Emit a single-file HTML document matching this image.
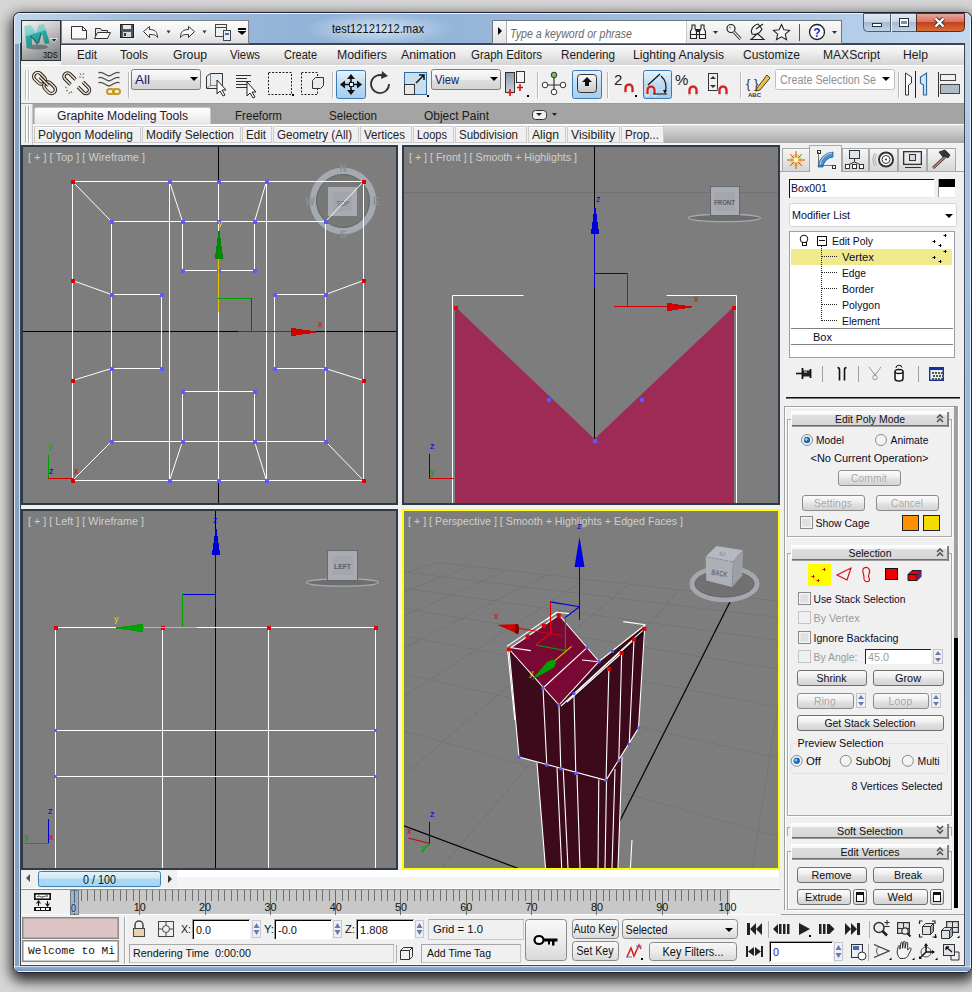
<!DOCTYPE html>
<html><head><meta charset="utf-8"><title>3ds Max</title>
<style>html,body{margin:0;padding:0;width:972px;height:992px;overflow:hidden;background:#d6d6d6;font-family:"Liberation Sans",sans-serif}</style>
</head><body><svg width="972" height="992" viewBox="0 0 972 992" style="position:absolute;left:0;top:0;display:block"><defs><filter id="shd" x="-5%" y="-5%" width="110%" height="110%"><feGaussianBlur stdDeviation="6.5"/></filter><linearGradient id="glass" x1="0" y1="0" x2="1" y2="0"><stop offset="0" stop-color="#bcd2ea"/><stop offset="0.3" stop-color="#c4d8ee"/><stop offset="0.6" stop-color="#bcd2ea"/><stop offset="1" stop-color="#b8cfe8"/></linearGradient><linearGradient id="tbar" x1="0" y1="0" x2="1" y2="0"><stop offset="0" stop-color="#c0d6ec"/><stop offset="0.12" stop-color="#a4c0e0"/><stop offset="0.3" stop-color="#92b2d7"/><stop offset="0.55" stop-color="#98b7da"/><stop offset="0.8" stop-color="#aac6e4"/><stop offset="1" stop-color="#c4d8ee"/></linearGradient><radialGradient id="glow" cx="0.5" cy="0.5" r="0.5"><stop offset="0" stop-color="#d8e8f6" stop-opacity="0.9"/><stop offset="1" stop-color="#d8e8f6" stop-opacity="0"/></radialGradient><linearGradient id="rfr" x1="0" y1="0" x2="0" y2="1"><stop offset="0" stop-color="#c4d8ee"/><stop offset="0.12" stop-color="#a8c4e2"/><stop offset="0.4" stop-color="#98b8da"/><stop offset="1" stop-color="#9cbcde"/></linearGradient><linearGradient id="bfr" x1="0" y1="0" x2="0" y2="1"><stop offset="0" stop-color="#8eaed2"/><stop offset="1" stop-color="#7898c0"/></linearGradient><linearGradient id="qat" x1="0" y1="0" x2="0" y2="1"><stop offset="0" stop-color="#fdfdfd"/><stop offset="0.5" stop-color="#f0f0f0"/><stop offset="1" stop-color="#dedede"/></linearGradient><linearGradient id="ic" x1="0" y1="0" x2="0" y2="1"><stop offset="0" stop-color="#fafafa"/><stop offset="1" stop-color="#e2e2e2"/></linearGradient><linearGradient id="wb" x1="0" y1="0" x2="0" y2="1"><stop offset="0" stop-color="#e4ecf5"/><stop offset="0.45" stop-color="#c9d8ea"/><stop offset="0.5" stop-color="#a9bcd3"/><stop offset="1" stop-color="#c0d3e8"/></linearGradient><linearGradient id="wbc" x1="0" y1="0" x2="0" y2="1"><stop offset="0" stop-color="#eaa79c"/><stop offset="0.45" stop-color="#d9735f"/><stop offset="0.5" stop-color="#c7401f"/><stop offset="1" stop-color="#d8703a"/></linearGradient><linearGradient id="logo" x1="0" y1="0" x2="0.5" y2="1"><stop offset="0" stop-color="#f4f4f4"/><stop offset="0.4" stop-color="#d0d0d0"/><stop offset="1" stop-color="#8a8a8a"/></linearGradient><linearGradient id="mg" x1="0" y1="0" x2="0.35" y2="1"><stop offset="0" stop-color="#a6dcd8"/><stop offset="0.48" stop-color="#7ccbc6"/><stop offset="0.52" stop-color="#2eaaa5"/><stop offset="1" stop-color="#1c9490"/></linearGradient><linearGradient id="menu" x1="0" y1="0" x2="0" y2="1"><stop offset="0" stop-color="#fbfbfb"/><stop offset="0.5" stop-color="#e8e8e8"/><stop offset="1" stop-color="#d4d4d4"/></linearGradient><linearGradient id="dd" x1="0" y1="0" x2="0" y2="1"><stop offset="0" stop-color="#fbfbfb"/><stop offset="0.5" stop-color="#ececec"/><stop offset="0.51" stop-color="#dfdfdf"/><stop offset="1" stop-color="#d2d2d2"/></linearGradient><linearGradient id="act" x1="0" y1="0" x2="0" y2="1"><stop offset="0" stop-color="#e6f2fc"/><stop offset="0.5" stop-color="#bcdcf4"/><stop offset="1" stop-color="#a6cdee"/></linearGradient><linearGradient id="piv" x1="0" y1="0" x2="0" y2="1"><stop offset="0" stop-color="#8a96a4"/><stop offset="1" stop-color="#d0d8e0"/></linearGradient><linearGradient id="kb" x1="0" y1="0" x2="0" y2="1"><stop offset="0" stop-color="#f8f8f8"/><stop offset="1" stop-color="#c8c8c8"/></linearGradient><linearGradient id="rbr" x1="0" y1="0" x2="0" y2="1"><stop offset="0" stop-color="#dedede"/><stop offset="1" stop-color="#a9a9a9"/></linearGradient><linearGradient id="rtab" x1="0" y1="0" x2="0" y2="1"><stop offset="0" stop-color="#ffffff"/><stop offset="0.6" stop-color="#f2f2f2"/><stop offset="1" stop-color="#e4e4e4"/></linearGradient><clipPath id="c1"><rect x="23" y="147" width="373" height="356"/></clipPath><clipPath id="c2"><rect x="404" y="147" width="374" height="356"/></clipPath><clipPath id="c3"><rect x="23" y="511" width="373" height="357"/></clipPath><clipPath id="c4"><rect x="404" y="511" width="374" height="357"/></clipPath><linearGradient id="tabi" x1="0" y1="0" x2="0" y2="1"><stop offset="0" stop-color="#f6f6f6"/><stop offset="0.5" stop-color="#e6e6e6"/><stop offset="1" stop-color="#d4d4d4"/></linearGradient><linearGradient id="rh" x1="0" y1="0" x2="0" y2="1"><stop offset="0" stop-color="#ffffff"/><stop offset="0.25" stop-color="#f6f6f6"/><stop offset="0.3" stop-color="#dedede"/><stop offset="1" stop-color="#d6d6d6"/></linearGradient><linearGradient id="btn" x1="0" y1="0" x2="0" y2="1"><stop offset="0" stop-color="#fdfdfd"/><stop offset="0.45" stop-color="#eeeeee"/><stop offset="0.55" stop-color="#e2e2e2"/><stop offset="1" stop-color="#d2d2d2"/></linearGradient><linearGradient id="thumb" x1="0" y1="0" x2="0" y2="1"><stop offset="0" stop-color="#e2f2fb"/><stop offset="0.45" stop-color="#cfe9f8"/><stop offset="0.5" stop-color="#a9d9f4"/><stop offset="1" stop-color="#a6d6f2"/></linearGradient><linearGradient id="kbtn" x1="0" y1="0" x2="0" y2="1"><stop offset="0" stop-color="#f8f8f8"/><stop offset="0.5" stop-color="#ececec"/><stop offset="1" stop-color="#d8d8d8"/></linearGradient></defs><rect x="0" y="0" width="972" height="992" fill="#d5d5d5" />
<rect x="11" y="15" width="964" height="966" rx="10" fill="#000" opacity="0.8" filter="url(#shd)"/>
<rect x="13.5" y="12.5" width="958" height="960" rx="6" fill="url(#glass)" stroke="#1f252c" stroke-width="1"/>
<path d="M15 19 a5 5 0 0 1 5-5 h945 a5 5 0 0 1 5 5 v24 h-955z" fill="url(#tbar)"/>
<ellipse cx="378" cy="29" rx="75" ry="16" fill="url(#glow)"/>
<rect x="14.5" y="13.5" width="956" height="958" rx="5" fill="none" stroke="#f4f8fc" stroke-opacity="0.8" stroke-width="1"/>
<rect x="966" y="44" width="4" height="922" fill="url(#rfr)" />
<rect x="15" y="44" width="4" height="922" fill="#84a2c2" />
<rect x="19" y="44" width="1" height="922" fill="#cfdeee" />
<rect x="15" y="967" width="955" height="4" fill="url(#bfr)" />
<rect x="15" y="966" width="955" height="1" fill="#d0e0f0" />
<rect x="970" y="20" width="1" height="947" fill="#e4eef8" />
<rect x="20" y="43" width="945" height="923" fill="#3b4450" />
<rect x="21" y="45" width="943" height="920" fill="#f0f0f0" />
<rect x="61.5" y="20.5" width="187" height="23" fill="url(#qat)" stroke="#7b8088" stroke-width="1"/>
<path d="M71.5 26.5h11l4 4v8.5h-15z" fill="#f8f8f8" stroke="#333" stroke-width="1" />
<path d="M82.5 26.5v4h4" fill="none" stroke="#333" stroke-width="1" />
<path d="M95.5 28.5h5l1 2h6v8h-12z" fill="#e4e4e4" stroke="#333" stroke-width="1" />
<path d="M97.5 32.5h13l-3 6h-13z" fill="#f4f4f4" stroke="#333" stroke-width="1" />
<rect x="120.5" y="24.5" width="13" height="13" rx="0" fill="#4a5568" stroke="#222" stroke-width="1" />
<rect x="123" y="25" width="8" height="4" fill="#e8e8e8" />
<rect x="123" y="32" width="8" height="5" fill="#d8d8d8" />
<rect x="124" y="33" width="2" height="3" fill="#333" />
<path d="M143.5 31.5 l6-5 v3 c5 0 8 2 8 8 c-2-3-4-3-8-3 v3z" fill="#f8f8f8" stroke="#333" stroke-width="1" stroke-linejoin="round"/>
<path d="M166.5 30.5h4l-2 3z" fill="#333" stroke="none" stroke-width="1" />
<path d="M194.5 31.5 l-6-5 v3 c-5 0-8 2-8 8 c2-3 4-3 8-3 v3z" fill="#f8f8f8" stroke="#333" stroke-width="1" stroke-linejoin="round"/>
<path d="M202.5 30.5h4l-2 3z" fill="#333" stroke="none" stroke-width="1" />
<rect x="215.5" y="24.5" width="11" height="12" rx="0" fill="#f0f0f0" stroke="#444" stroke-width="1" />
<rect x="216" y="27" width="10" height="1" fill="#444" />
<rect x="223.5" y="30.5" width="7" height="10" rx="0" fill="#e8eef8" stroke="#444" stroke-width="1" />
<rect x="225" y="33" width="4" height="2" fill="#4070b0" />
<rect x="238" y="28" width="8" height="2" fill="#000" />
<path d="M237.5 31h9l-4.5 4z" fill="#000" stroke="none" stroke-width="1" />
<text x="378" y="33" font-family="Liberation Sans" font-size="12.5" fill="#111" text-anchor="middle" font-weight="normal" font-style="normal" textLength="92" lengthAdjust="spacingAndGlyphs" >test12121212.max</text>
<rect x="492.5" y="20.5" width="349" height="23" fill="url(#ic)" stroke="#6d7680" stroke-width="1"/>
<rect x="507" y="21" width="179" height="22" fill="#fff" />
<rect x="506" y="21" width="1" height="22" fill="#b0b0b0" />
<rect x="686" y="21" width="1" height="22" fill="#c8c8c8" />
<path d="M498 27v8l4-4z" fill="#000" stroke="none" stroke-width="1" />
<text x="510" y="38" font-family="Liberation Sans" font-size="12" fill="#6a6a6a" text-anchor="start" font-weight="normal" font-style="italic" textLength="122" lengthAdjust="spacingAndGlyphs" >Type a keyword or phrase</text>
<path d="M690.5 38.5v-7l1.5-3v-3.5h3v3.5l1.5 3v7z" fill="#f8f8f8" stroke="#222" stroke-width="1.1" />
<path d="M699.5 38.5v-7l1.5-3v-3.5h3v3.5l1.5 3v7z" fill="#f8f8f8" stroke="#222" stroke-width="1.1" />
<rect x="696" y="29" width="4" height="3" fill="#222" />
<rect x="690" y="34" width="16" height="1" fill="#222" />
<path d="M713 31h5l-2.5 3z" fill="#333" stroke="none" stroke-width="1" />
<circle cx="731" cy="28.5" r="4" fill="#f4f4f4" stroke="#222" stroke-width="1.2"/>
<path d="M733.5 31.5l7 7.5" fill="none" stroke="#222" stroke-width="3" />
<path d="M733.5 31.5l7 7.5" fill="none" stroke="#f0f0f0" stroke-width="1.2" />
<circle cx="730" cy="27.5" r="1" fill="#888"/>
<path d="M752 34c-2-4 1-9 6-10l4 5c-2 4-6 6-10 5z" fill="#f4f4f4" stroke="#222" stroke-width="1.1" />
<path d="M756 29l7-5" fill="none" stroke="#222" stroke-width="1.2" />
<path d="M751 39.5h13l-6.5-6z" fill="#f4f4f4" stroke="#222" stroke-width="1.1" />
<path d="M781.5 24.5l2.4 5.2 5.6.6-4.2 3.8 1.2 5.6-5-2.9-5 2.9 1.2-5.6-4.2-3.8 5.6-.6z" fill="#f8f8f8" stroke="#222" stroke-width="1.1" />
<rect x="799" y="24" width="1" height="17" fill="#555" />
<circle cx="817" cy="32" r="7.5" fill="#fff" stroke="#222" stroke-width="1.3"/>
<text x="817" y="36.5" font-family="Liberation Sans" font-size="12" fill="#1434c8" text-anchor="middle" font-weight="bold" font-style="normal" >?</text>
<path d="M832 31h5l-2.5 3z" fill="#333" stroke="none" stroke-width="1" />
<path d="M863.5 13.5h53v18h-49a4 4 0 0 1-4-4z" fill="url(#wb)" stroke="#4e5d70" stroke-width="1"/>
<rect x="890" y="14" width="1" height="18" fill="#4e5d70" />
<rect x="891" y="14" width="1" height="18" fill="#f0f4f8" />
<path d="M916.5 13.5h48v14a4 4 0 0 1-4 4h-44z" fill="url(#wbc)" stroke="#5a2a20" stroke-width="1"/>
<rect x="872.5" y="23.5" width="9" height="3" rx="0" fill="#fff" stroke="#2a3340" stroke-width="1" />
<rect x="899.5" y="18.5" width="9" height="8" rx="0" fill="#fff" stroke="#2a3340" stroke-width="1" />
<rect x="901" y="21" width="6" height="3" fill="#7890a8" />
<path d="M935.5 18.5l8 8M943.5 18.5l-8 8" fill="none" stroke="#2a3340" stroke-width="4.2" />
<path d="M935.5 18.5l8 8M943.5 18.5l-8 8" fill="none" stroke="#fff" stroke-width="2.4" />
<rect x="21.5" y="20.5" width="39" height="40" fill="url(#logo)" stroke="#2e3338" stroke-width="1"/>
<ellipse cx="37" cy="47" rx="11" ry="2.5" fill="#1e3a3a" opacity="0.45"/>
<path d="M24.2 26.2 L30.6 24.7 L36 33 L38.6 24.7 L44 24 L49.7 43.3 L44.8 44 L41.5 32 L37.7 44.6 L32 36 L32 46.4 L26.7 47 Z" fill="url(#mg)" stroke="none" stroke-width="1" />
<path d="M31 36 L37.5 44 M41.2 33 L38.5 43" fill="none" stroke="#0e4a48" stroke-width="1.2" opacity="0.75"/>
<path d="M50.5 38.5h7l-3.5 4z" fill="#2a3038" stroke="#fff" stroke-width="0.8" />
<text x="58" y="58" font-family="Liberation Sans" font-size="9" fill="#111" text-anchor="end" font-weight="normal" font-style="normal" textLength="15" lengthAdjust="spacingAndGlyphs" >3DS</text>
<rect x="61" y="45" width="903" height="20" fill="url(#menu)" />
<rect x="21" y="65" width="943" height="1" fill="#ffffff" />
<text x="77" y="59" font-family="Liberation Sans" font-size="12" fill="#1a1a1a" text-anchor="start" font-weight="normal" font-style="normal" textLength="20" lengthAdjust="spacingAndGlyphs" >Edit</text>
<text x="120" y="59" font-family="Liberation Sans" font-size="12" fill="#1a1a1a" text-anchor="start" font-weight="normal" font-style="normal" textLength="28" lengthAdjust="spacingAndGlyphs" >Tools</text>
<text x="173" y="59" font-family="Liberation Sans" font-size="12" fill="#1a1a1a" text-anchor="start" font-weight="normal" font-style="normal" textLength="34" lengthAdjust="spacingAndGlyphs" >Group</text>
<text x="230" y="59" font-family="Liberation Sans" font-size="12" fill="#1a1a1a" text-anchor="start" font-weight="normal" font-style="normal" textLength="30" lengthAdjust="spacingAndGlyphs" >Views</text>
<text x="284" y="59" font-family="Liberation Sans" font-size="12" fill="#1a1a1a" text-anchor="start" font-weight="normal" font-style="normal" textLength="33" lengthAdjust="spacingAndGlyphs" >Create</text>
<text x="337" y="59" font-family="Liberation Sans" font-size="12" fill="#1a1a1a" text-anchor="start" font-weight="normal" font-style="normal" textLength="50" lengthAdjust="spacingAndGlyphs" >Modifiers</text>
<text x="401" y="59" font-family="Liberation Sans" font-size="12" fill="#1a1a1a" text-anchor="start" font-weight="normal" font-style="normal" textLength="55" lengthAdjust="spacingAndGlyphs" >Animation</text>
<text x="471" y="59" font-family="Liberation Sans" font-size="12" fill="#1a1a1a" text-anchor="start" font-weight="normal" font-style="normal" textLength="71" lengthAdjust="spacingAndGlyphs" >Graph Editors</text>
<text x="561" y="59" font-family="Liberation Sans" font-size="12" fill="#1a1a1a" text-anchor="start" font-weight="normal" font-style="normal" textLength="54" lengthAdjust="spacingAndGlyphs" >Rendering</text>
<text x="633" y="59" font-family="Liberation Sans" font-size="12" fill="#1a1a1a" text-anchor="start" font-weight="normal" font-style="normal" textLength="91" lengthAdjust="spacingAndGlyphs" >Lighting Analysis</text>
<text x="743" y="59" font-family="Liberation Sans" font-size="12" fill="#1a1a1a" text-anchor="start" font-weight="normal" font-style="normal" textLength="57" lengthAdjust="spacingAndGlyphs" >Customize</text>
<text x="823" y="59" font-family="Liberation Sans" font-size="12" fill="#1a1a1a" text-anchor="start" font-weight="normal" font-style="normal" textLength="57" lengthAdjust="spacingAndGlyphs" >MAXScript</text>
<text x="903" y="59" font-family="Liberation Sans" font-size="12" fill="#1a1a1a" text-anchor="start" font-weight="normal" font-style="normal" textLength="25" lengthAdjust="spacingAndGlyphs" >Help</text>
<rect x="21" y="66" width="943" height="37" fill="#f0f0f0" />
<rect x="25" y="70" width="1" height="30" fill="#c0c0c0" />
<rect x="28" y="70" width="1" height="30" fill="#c0c0c0" />
<rect x="26" y="70" width="1" height="30" fill="#fff" />
<rect x="29" y="70" width="1" height="30" fill="#fff" />
<g transform="translate(39.5,78.3) rotate(45)"><rect x="-6.5" y="-4.0" width="13" height="8" rx="4.0" fill="none" stroke="#1a1a1a" stroke-width="3.4"/><rect x="-6.5" y="-4.0" width="13" height="8" rx="4.0" fill="none" stroke="#f2e2c0" stroke-width="1.6"/></g>
<g transform="translate(49.6,87.8) rotate(45)"><rect x="-6.5" y="-4.0" width="13" height="8" rx="4.0" fill="none" stroke="#1a1a1a" stroke-width="3.4"/><rect x="-6.5" y="-4.0" width="13" height="8" rx="4.0" fill="none" stroke="#f2e2c0" stroke-width="1.6"/></g>
<g transform="translate(40,77) rotate(45)"><line x1="0" y1="0" x2="12" y2="0" stroke="#1a1a1a" stroke-width="3.4"/><line x1="0" y1="0" x2="12" y2="0" stroke="#f2e2c0" stroke-width="1.6"/></g>
<path d="M75.5 79.5 L70 74 a3.5 3.5 0 0 0-5 5 L70.5 84.5" fill="none" stroke="#1a1a1a" stroke-width="3.4"/><path d="M75.5 79.5 L70 74 a3.5 3.5 0 0 0-5 5 L70.5 84.5" fill="none" stroke="#f2e2c0" stroke-width="1.6"/>
<path d="M78 87 L83.5 92.5 a3.5 3.5 0 0 0 5-5 L83 82" fill="none" stroke="#1a1a1a" stroke-width="3.4"/><path d="M78 87 L83.5 92.5 a3.5 3.5 0 0 0 5-5 L83 82" fill="none" stroke="#f2e2c0" stroke-width="1.6"/>
<path d="M80 73l1 2M84 73l-1 2M79 77h2M84 78l-2-1M65 87l2 1M66 91l2-1M69 94l1-2M72 93l-1-2" fill="none" stroke="#666" stroke-width="0.9" />
<path d="M98.5 73c3.5-3 7 3 10.5 3s7-6 10.5-3M98.5 78c3.5-3 7 3 10.5 3s7-6 10.5-3M98.5 83c3.5-3 7 3 10.5 3s7-6 10.5-3" fill="none" stroke="#505050" stroke-width="1.3" />
<rect x="107" y="89" width="7" height="5" rx="2.5" fill="none" stroke="#c89a18" stroke-width="2"/><rect x="113" y="89" width="7" height="5" rx="2.5" fill="none" stroke="#c89a18" stroke-width="2"/>
<rect x="128" y="72" width="1" height="26" fill="#b8b8b8" />
<rect x="129" y="72" width="1" height="26" fill="#fff" />
<rect x="131.5" y="69.5" width="69" height="20" rx="2" fill="url(#dd)" stroke="#7d7d7d" stroke-width="1"/>
<text x="135" y="84" font-family="Liberation Sans" font-size="12" fill="#102060" text-anchor="start" font-weight="normal" font-style="normal" textLength="15" lengthAdjust="spacingAndGlyphs" >All</text>
<path d="M190 77h8l-4 4z" fill="#000" stroke="none" stroke-width="1" />
<path d="M206.5 76.5l4-3h12v12l-4 3h-12z" fill="#e8edf2" stroke="#333" stroke-width="1" />
<path d="M210.5 73.5v12M206.5 88.5l4-3h12" fill="none" stroke="#666" stroke-width="0.8" />
<path d="M217 80v14l3-3 3 5 2-1-3-5h4z" fill="#fff" stroke="#222" stroke-width="1" />
<rect x="236" y="75" width="15" height="1" fill="#333" />
<rect x="236" y="78" width="11" height="1" fill="#333" />
<rect x="236" y="81" width="15" height="1" fill="#333" />
<rect x="236" y="84" width="11" height="1" fill="#333" />
<rect x="236" y="87" width="15" height="1" fill="#333" />
<path d="M247 82v14l3-3 3 5 2-1-3-5h4z" fill="#fff" stroke="#222" stroke-width="1" />
<rect x="268.5" y="72.5" width="23" height="22" fill="none" stroke="#222" stroke-width="1" stroke-dasharray="2 1.5"/>
<path d="M292 94h2v2h-2z" fill="#000" stroke="none" stroke-width="1" />
<rect x="301.5" y="72.5" width="16" height="22" fill="none" stroke="#222" stroke-width="1" stroke-dasharray="2 1.5"/>
<path d="M312.5 80.5l3-3h8v8l-3 3h-8z" fill="#e6ebf0" stroke="#333" stroke-width="1" />
<rect x="332" y="72" width="1" height="26" fill="#b8b8b8" />
<rect x="333" y="72" width="1" height="26" fill="#fff" />
<rect x="336.5" y="70.5" width="29" height="28" rx="2" fill="url(#act)" stroke="#3b79b5" stroke-width="1"/>
<path d="M351 74l4 5h-8zM351 95l4-5h-8zM340 84.5l5-4v8zM362 84.5l-5-4v8z" fill="#111" stroke="none" stroke-width="1" />
<path d="M351 78v13M344 84.5h14" fill="none" stroke="#111" stroke-width="1.6" />
<rect x="349.5" y="82.5" width="4" height="4" rx="0" fill="#fff" stroke="#111" stroke-width="1" />
<path d="M389 84a9 9 0 1 1-5-8" fill="none" stroke="#333" stroke-width="1.8"/>
<path d="M382 71l6 5-7 3z" fill="#333" stroke="none" stroke-width="1" />
<rect x="404.5" y="72.5" width="22" height="22" rx="0" fill="#c8dff0" stroke="#2f6aa0" stroke-width="1" />
<rect x="404.5" y="84.5" width="10" height="10" rx="0" fill="#e8e8e8" stroke="#333" stroke-width="1" />
<path d="M416 83l8-8M419 75h5v5" fill="none" stroke="#111" stroke-width="1.5" />
<path d="M427 95h2v2h-2z" fill="#000" stroke="none" stroke-width="1" />
<rect x="431.5" y="69.5" width="69" height="20" rx="2" fill="url(#dd)" stroke="#7d7d7d" stroke-width="1"/>
<text x="435" y="84" font-family="Liberation Sans" font-size="12" fill="#102060" text-anchor="start" font-weight="normal" font-style="normal" textLength="24" lengthAdjust="spacingAndGlyphs" >View</text>
<path d="M490 77h8l-4 4z" fill="#000" stroke="none" stroke-width="1" />
<rect x="505" y="72" width="10" height="21" fill="url(#piv)" />
<rect x="505.5" y="72.5" width="9" height="20" rx="0" fill="none" stroke="#333" stroke-width="1" />
<rect x="516.5" y="71.5" width="8" height="11" rx="0" fill="#f4f4f4" stroke="#333" stroke-width="1" />
<path d="M510 89v7M507 92.5h6M520 84v7M517 87.5h6" fill="none" stroke="#d01010" stroke-width="1.6" />
<path d="M527 95h2v2h-2z" fill="#000" stroke="none" stroke-width="1" />
<rect x="537" y="72" width="1" height="26" fill="#b8b8b8" />
<rect x="538" y="72" width="1" height="26" fill="#fff" />
<path d="M554 76v18M545 85h18" fill="none" stroke="#333" stroke-width="1.2" />
<circle cx="554" cy="75" r="2.8" fill="#7ac050" stroke="#333"/><circle cx="545" cy="85" r="2.8" fill="#fff" stroke="#333"/><circle cx="563" cy="85" r="2.8" fill="#fff" stroke="#333"/><circle cx="554" cy="92" r="2.8" fill="#fff" stroke="#333"/>
<rect x="572.5" y="70.5" width="29" height="28" rx="2" fill="url(#act)" stroke="#3b79b5" stroke-width="1"/>
<rect x="577.5" y="74.5" width="19" height="18" rx="3" fill="url(#kb)" stroke="#333"/>
<path d="M587 77l5 5h-3v4h-4v-4h-3z" fill="#111" stroke="none" stroke-width="1" />
<rect x="607" y="72" width="1" height="26" fill="#b8b8b8" />
<rect x="608" y="72" width="1" height="26" fill="#fff" />
<text x="614" y="85" font-family="Liberation Sans" font-size="15" fill="#222" text-anchor="start" font-weight="normal" font-style="normal" >2</text>
<path d="M624 94v-6a5 5 0 0 1 10 0v6h-3v-6a2 2 0 0 0-4 0v6z" fill="#d42020" stroke="#fff" stroke-width="0.6"/>
<rect x="624" y="92" width="3" height="2" fill="#ddd" />
<rect x="631" y="92" width="3" height="2" fill="#ddd" />
<path d="M635 95h2v2h-2z" fill="#000" stroke="none" stroke-width="1" />
<rect x="643.5" y="70.5" width="28" height="28" rx="2" fill="url(#act)" stroke="#3b79b5" stroke-width="1"/>
<path d="M646 96v-6a5 5 0 0 1 10 0v6h-3v-6a2 2 0 0 0-4 0v6z" fill="#d42020" stroke="#fff" stroke-width="0.6"/>
<rect x="646" y="94" width="3" height="2" fill="#ddd" />
<rect x="653" y="94" width="3" height="2" fill="#ddd" />
<path d="M648 85l12-11M667 94h-14M661 76a14 14 0 0 1 4 16" fill="none" stroke="#111" stroke-width="1.2" />
<path d="M663 90l2 4 2-4z" fill="#111" stroke="none" stroke-width="1" />
<text x="675" y="85" font-family="Liberation Sans" font-size="15" fill="#222" text-anchor="start" font-weight="normal" font-style="normal" >%</text>
<path d="M688 96v-6a5 5 0 0 1 10 0v6h-3v-6a2 2 0 0 0-4 0v6z" fill="#d42020" stroke="#fff" stroke-width="0.6"/>
<rect x="688" y="94" width="3" height="2" fill="#ddd" />
<rect x="695" y="94" width="3" height="2" fill="#ddd" />
<rect x="708.5" y="73.5" width="9" height="17" rx="0" fill="#f0f0f0" stroke="#333" stroke-width="1" />
<path d="M710 79h6l-3-3zM710 85h6l-3 3z" fill="#333" stroke="none" stroke-width="1" />
<path d="M718 96v-6a5 5 0 0 1 10 0v6h-3v-6a2 2 0 0 0-4 0v6z" fill="#d42020" stroke="#fff" stroke-width="0.6"/>
<rect x="718" y="94" width="3" height="2" fill="#ddd" />
<rect x="725" y="94" width="3" height="2" fill="#ddd" />
<rect x="740" y="72" width="1" height="26" fill="#b8b8b8" />
<rect x="741" y="72" width="1" height="26" fill="#fff" />
<text x="746" y="88" font-family="Liberation Sans" font-size="13" fill="#333" text-anchor="start" font-weight="normal" font-style="normal" >{ }</text>
<path d="M757 88l10-13 3 3-10 12-4 1z" fill="#f0c040" stroke="#333" stroke-width="0.9" />
<text x="748" y="97" font-family="Liberation Sans" font-size="6" fill="#333" text-anchor="start" font-weight="bold" font-style="normal" >ABC</text>
<rect x="775.5" y="69.5" width="119" height="20" rx="2" fill="#fff" stroke="#b8c0c8" stroke-width="1"/>
<text x="780" y="84" font-family="Liberation Sans" font-size="12" fill="#909090" text-anchor="start" font-weight="normal" font-style="normal" textLength="96" lengthAdjust="spacingAndGlyphs" >Create Selection Se</text>
<path d="M882 77h8l-4 4z" fill="#000" stroke="none" stroke-width="1" />
<rect x="898" y="72" width="1" height="26" fill="#b8b8b8" />
<rect x="899" y="72" width="1" height="26" fill="#fff" />
<path d="M905.5 95v-22l6 4v6l-3 2v10z" fill="#fff" stroke="#333" stroke-width="1" />
<rect x="915" y="71" width="1" height="27" fill="#222" />
<path d="M926.5 95v-22l-6 4v6l3 2v10z" fill="#d8e8f8" stroke="#2f6aa0" stroke-width="1.2" />
<rect x="938" y="72" width="1" height="25" fill="#333" />
<rect x="940.5" y="74.5" width="15" height="6" rx="0" fill="#f0f0f0" stroke="#444" stroke-width="1" />
<rect x="940.5" y="84.5" width="19" height="9" rx="0" fill="#b0bac4" stroke="#444" stroke-width="1" />
<rect x="21" y="103" width="943" height="21" fill="#a4a4a4" />
<rect x="21" y="103" width="943" height="1" fill="#9a9a9a" />
<rect x="21" y="124" width="943" height="1" fill="#ffffff" />
<rect x="21" y="125" width="943" height="18" fill="url(#rbr)" />
<rect x="21" y="143" width="943" height="2" fill="#f4f4f4" />
<rect x="21" y="104" width="12" height="41" fill="#efefef" />
<rect x="25" y="106" width="1" height="37" fill="#b0b0b0" />
<rect x="28" y="106" width="1" height="37" fill="#b0b0b0" />
<rect x="26" y="106" width="1" height="37" fill="#fff" />
<rect x="29" y="106" width="1" height="37" fill="#fff" />
<rect x="32" y="104" width="1" height="41" fill="#c8c8c8" />
<path d="M34.5 124.5v-15a2 2 0 0 1 2-2h172a2 2 0 0 1 2 2v15" fill="url(#rtab)" stroke="#c6c6c6" stroke-width="1"/>
<text x="57" y="120" font-family="Liberation Sans" font-size="12" fill="#1a1a3a" text-anchor="start" font-weight="normal" font-style="normal" textLength="131" lengthAdjust="spacingAndGlyphs" >Graphite Modeling Tools</text>
<text x="235" y="120" font-family="Liberation Sans" font-size="12" fill="#1a1a1a" text-anchor="start" font-weight="normal" font-style="normal" textLength="47" lengthAdjust="spacingAndGlyphs" >Freeform</text>
<text x="329" y="120" font-family="Liberation Sans" font-size="12" fill="#1a1a1a" text-anchor="start" font-weight="normal" font-style="normal" textLength="48" lengthAdjust="spacingAndGlyphs" >Selection</text>
<text x="424" y="120" font-family="Liberation Sans" font-size="12" fill="#1a1a1a" text-anchor="start" font-weight="normal" font-style="normal" textLength="65" lengthAdjust="spacingAndGlyphs" >Object Paint</text>
<rect x="532.5" y="110.5" width="14" height="9" rx="3" fill="#f0f0f0" stroke="#333"/>
<path d="M536 113h6l-3 3z" fill="#222" stroke="none" stroke-width="1" />
<path d="M552 113h5l-2.5 3z" fill="#222" stroke="none" stroke-width="1" />
<rect x="33" y="125" width="630" height="18" fill="#efefef" />
<rect x="33" y="125" width="630" height="1" fill="#fdfdfd" />
<rect x="34.5" y="126.5" width="106" height="16" rx="0" fill="#f0f0f0" stroke="#cbcbcb" stroke-width="1" />
<rect x="35" y="127" width="105" height="1" fill="#fbfbfb" />
<text x="38" y="139" font-family="Liberation Sans" font-size="12" fill="#222" text-anchor="start" font-weight="normal" font-style="normal" textLength="95" lengthAdjust="spacingAndGlyphs" >Polygon Modeling</text>
<rect x="142.5" y="126.5" width="98" height="16" rx="0" fill="#f0f0f0" stroke="#cbcbcb" stroke-width="1" />
<rect x="143" y="127" width="97" height="1" fill="#fbfbfb" />
<text x="146" y="139" font-family="Liberation Sans" font-size="12" fill="#222" text-anchor="start" font-weight="normal" font-style="normal" textLength="88" lengthAdjust="spacingAndGlyphs" >Modify Selection</text>
<rect x="242.5" y="126.5" width="29" height="16" rx="0" fill="#f0f0f0" stroke="#cbcbcb" stroke-width="1" />
<rect x="243" y="127" width="28" height="1" fill="#fbfbfb" />
<text x="246" y="139" font-family="Liberation Sans" font-size="12" fill="#222" text-anchor="start" font-weight="normal" font-style="normal" textLength="20" lengthAdjust="spacingAndGlyphs" >Edit</text>
<rect x="273.5" y="126.5" width="85" height="16" rx="0" fill="#f0f0f0" stroke="#cbcbcb" stroke-width="1" />
<rect x="274" y="127" width="84" height="1" fill="#fbfbfb" />
<text x="277" y="139" font-family="Liberation Sans" font-size="12" fill="#222" text-anchor="start" font-weight="normal" font-style="normal" textLength="75" lengthAdjust="spacingAndGlyphs" >Geometry (All)</text>
<rect x="360.5" y="126.5" width="51" height="16" rx="0" fill="#f0f0f0" stroke="#cbcbcb" stroke-width="1" />
<rect x="361" y="127" width="50" height="1" fill="#fbfbfb" />
<text x="364" y="139" font-family="Liberation Sans" font-size="12" fill="#222" text-anchor="start" font-weight="normal" font-style="normal" textLength="41" lengthAdjust="spacingAndGlyphs" >Vertices</text>
<rect x="413.5" y="126.5" width="40" height="16" rx="0" fill="#f0f0f0" stroke="#cbcbcb" stroke-width="1" />
<rect x="414" y="127" width="39" height="1" fill="#fbfbfb" />
<text x="417" y="139" font-family="Liberation Sans" font-size="12" fill="#222" text-anchor="start" font-weight="normal" font-style="normal" textLength="30" lengthAdjust="spacingAndGlyphs" >Loops</text>
<rect x="455.5" y="126.5" width="71" height="16" rx="0" fill="#f0f0f0" stroke="#cbcbcb" stroke-width="1" />
<rect x="456" y="127" width="70" height="1" fill="#fbfbfb" />
<text x="459" y="139" font-family="Liberation Sans" font-size="12" fill="#222" text-anchor="start" font-weight="normal" font-style="normal" textLength="59" lengthAdjust="spacingAndGlyphs" >Subdivision</text>
<rect x="528.5" y="126.5" width="37" height="16" rx="0" fill="#f0f0f0" stroke="#cbcbcb" stroke-width="1" />
<rect x="529" y="127" width="36" height="1" fill="#fbfbfb" />
<text x="532" y="139" font-family="Liberation Sans" font-size="12" fill="#222" text-anchor="start" font-weight="normal" font-style="normal" textLength="27" lengthAdjust="spacingAndGlyphs" >Align</text>
<rect x="567.5" y="126.5" width="52" height="16" rx="0" fill="#f0f0f0" stroke="#cbcbcb" stroke-width="1" />
<rect x="568" y="127" width="51" height="1" fill="#fbfbfb" />
<text x="571" y="139" font-family="Liberation Sans" font-size="12" fill="#222" text-anchor="start" font-weight="normal" font-style="normal" textLength="44" lengthAdjust="spacingAndGlyphs" >Visibility</text>
<rect x="621.5" y="126.5" width="42" height="16" rx="0" fill="#f0f0f0" stroke="#cbcbcb" stroke-width="1" />
<rect x="622" y="127" width="41" height="1" fill="#fbfbfb" />
<text x="625" y="139" font-family="Liberation Sans" font-size="12" fill="#222" text-anchor="start" font-weight="normal" font-style="normal" textLength="34" lengthAdjust="spacingAndGlyphs" >Prop...</text>
<rect x="21" y="145" width="377" height="360" fill="#2e3a46" />
<rect x="23" y="147" width="373" height="356" fill="#7d7d7d" />
<rect x="402" y="145" width="378" height="360" fill="#2e3a46" />
<rect x="404" y="147" width="374" height="356" fill="#7d7d7d" />
<rect x="21" y="509" width="377" height="361" fill="#2e3a46" />
<rect x="23" y="511" width="373" height="357" fill="#7d7d7d" />
<rect x="402" y="509" width="378" height="361" fill="#ffff00" />
<rect x="404" y="511" width="374" height="357" fill="#7d7d7d" />
<g clip-path="url(#c1)">
<text x="28" y="161" font-family="Liberation Sans" font-size="11" fill="#cfcfcf" text-anchor="start" font-weight="normal" font-style="normal" textLength="117" lengthAdjust="spacingAndGlyphs" >[ + ] [ Top ] [ Wireframe ]</text>
<rect x="218" y="147" width="1" height="356" fill="#000" />
<rect x="23" y="331" width="373" height="1" fill="#000" />
<circle cx="343" cy="201" r="30" fill="none" stroke="#a5a9b0" stroke-width="6.5"/>
<circle cx="343" cy="201" r="26.5" fill="#787878" stroke="#62666c" stroke-width="1"/>
<rect x="328" y="187" width="29" height="29" fill="#a8abb0" />
<rect x="333" y="192" width="19" height="19" fill="#a2a5aa" />
<text x="343" y="205.5" font-family="Liberation Sans" font-size="8" fill="#65696e" text-anchor="middle" font-weight="normal" font-style="normal" textLength="13" lengthAdjust="spacingAndGlyphs" >TOP</text>
<text x="343" y="171.5" font-family="Liberation Sans" font-size="10" fill="#8a8f98" text-anchor="middle" font-weight="bold" font-style="normal" >N</text>
<text x="343" y="238" font-family="Liberation Sans" font-size="10" fill="#8a8f98" text-anchor="middle" font-weight="bold" font-style="normal" >S</text>
<text x="310" y="205" font-family="Liberation Sans" font-size="10" fill="#8a8f98" text-anchor="middle" font-weight="bold" font-style="normal" >W</text>
<text x="376" y="205" font-family="Liberation Sans" font-size="10" fill="#8a8f98" text-anchor="middle" font-weight="bold" font-style="normal" >E</text>
<path d="M72.5 181.5 L363.5 181.5 L363.5 480.5 L72.5 480.5 Z" fill="none" stroke="#ffffff" stroke-width="1" stroke-linejoin="miter"/>
<path d="M111.5 221.5 L325.5 221.5 L325.5 441.5 L111.5 441.5 Z" fill="none" stroke="#ffffff" stroke-width="1" stroke-linejoin="miter"/>
<path d="M72.5 181.5 L111.5 221.5" fill="none" stroke="#ffffff" stroke-width="1" stroke-linejoin="miter"/>
<path d="M363.5 181.5 L325.5 221.5" fill="none" stroke="#ffffff" stroke-width="1" stroke-linejoin="miter"/>
<path d="M72.5 480.5 L111.5 441.5" fill="none" stroke="#ffffff" stroke-width="1" stroke-linejoin="miter"/>
<path d="M363.5 480.5 L325.5 441.5" fill="none" stroke="#ffffff" stroke-width="1" stroke-linejoin="miter"/>
<path d="M169.5 181.5 L182.5 221.5" fill="none" stroke="#ffffff" stroke-width="1" stroke-linejoin="miter"/>
<path d="M266.5 181.5 L254.5 221.5" fill="none" stroke="#ffffff" stroke-width="1" stroke-linejoin="miter"/>
<path d="M169.5 480.5 L182.5 441.5" fill="none" stroke="#ffffff" stroke-width="1" stroke-linejoin="miter"/>
<path d="M266.5 480.5 L254.5 441.5" fill="none" stroke="#ffffff" stroke-width="1" stroke-linejoin="miter"/>
<path d="M72.5 280.5 L111.5 294.5" fill="none" stroke="#ffffff" stroke-width="1" stroke-linejoin="miter"/>
<path d="M72.5 380.5 L111.5 368.5" fill="none" stroke="#ffffff" stroke-width="1" stroke-linejoin="miter"/>
<path d="M363.5 280.5 L325.5 294.5" fill="none" stroke="#ffffff" stroke-width="1" stroke-linejoin="miter"/>
<path d="M363.5 380.5 L325.5 368.5" fill="none" stroke="#ffffff" stroke-width="1" stroke-linejoin="miter"/>
<rect x="169" y="181" width="1" height="300" fill="#ffffff" />
<rect x="218" y="181" width="1" height="300" fill="#ffffff" />
<rect x="266" y="181" width="1" height="300" fill="#ffffff" />
<path d="M182.5 221.5 L182.5 270.5 L254.5 270.5 L254.5 221.5" fill="none" stroke="#ffffff" stroke-width="1" stroke-linejoin="miter"/>
<path d="M182.5 441.5 L182.5 391.5 L254.5 391.5 L254.5 441.5" fill="none" stroke="#ffffff" stroke-width="1" stroke-linejoin="miter"/>
<path d="M111.5 294.5 L161.5 294.5 L161.5 368.5 L111.5 368.5" fill="none" stroke="#ffffff" stroke-width="1" stroke-linejoin="miter"/>
<path d="M325.5 294.5 L274.5 294.5 L274.5 368.5 L325.5 368.5" fill="none" stroke="#ffffff" stroke-width="1" stroke-linejoin="miter"/>
<rect x="168" y="180" width="4" height="4" fill="#5a5aff" />
<rect x="217" y="180" width="4" height="4" fill="#5a5aff" />
<rect x="265" y="180" width="4" height="4" fill="#5a5aff" />
<rect x="110" y="220" width="4" height="4" fill="#5a5aff" />
<rect x="181" y="220" width="4" height="4" fill="#5a5aff" />
<rect x="217" y="220" width="4" height="4" fill="#5a5aff" />
<rect x="253" y="220" width="4" height="4" fill="#5a5aff" />
<rect x="324" y="220" width="4" height="4" fill="#5a5aff" />
<rect x="181" y="269" width="4" height="4" fill="#5a5aff" />
<rect x="217" y="269" width="4" height="4" fill="#5a5aff" />
<rect x="253" y="269" width="4" height="4" fill="#5a5aff" />
<rect x="110" y="293" width="4" height="4" fill="#5a5aff" />
<rect x="160" y="293" width="4" height="4" fill="#5a5aff" />
<rect x="273" y="293" width="4" height="4" fill="#5a5aff" />
<rect x="324" y="293" width="4" height="4" fill="#5a5aff" />
<rect x="110" y="367" width="4" height="4" fill="#5a5aff" />
<rect x="160" y="367" width="4" height="4" fill="#5a5aff" />
<rect x="273" y="367" width="4" height="4" fill="#5a5aff" />
<rect x="324" y="367" width="4" height="4" fill="#5a5aff" />
<rect x="181" y="390" width="4" height="4" fill="#5a5aff" />
<rect x="253" y="390" width="4" height="4" fill="#5a5aff" />
<rect x="110" y="440" width="4" height="4" fill="#5a5aff" />
<rect x="181" y="440" width="4" height="4" fill="#5a5aff" />
<rect x="253" y="440" width="4" height="4" fill="#5a5aff" />
<rect x="324" y="440" width="4" height="4" fill="#5a5aff" />
<rect x="168" y="479" width="4" height="4" fill="#5a5aff" />
<rect x="217" y="479" width="4" height="4" fill="#5a5aff" />
<rect x="265" y="479" width="4" height="4" fill="#5a5aff" />
<rect x="71" y="180" width="4" height="4" fill="#e00000" />
<rect x="362" y="180" width="4" height="4" fill="#e00000" />
<rect x="71" y="479" width="4" height="4" fill="#e00000" />
<rect x="362" y="479" width="4" height="4" fill="#e00000" />
<rect x="71" y="279" width="4" height="4" fill="#e00000" />
<rect x="362" y="279" width="4" height="4" fill="#e00000" />
<rect x="71" y="379" width="4" height="4" fill="#e00000" />
<rect x="362" y="379" width="4" height="4" fill="#e00000" />
<rect x="218" y="259" width="1" height="53" fill="#e8c000" />
<rect x="215" y="253" width="8" height="6" fill="#008800" />
<rect x="216" y="246" width="6" height="7" fill="#008800" />
<rect x="217" y="238" width="4" height="8" fill="#008800" />
<rect x="218" y="231" width="2" height="7" fill="#008800" />
<rect x="218" y="298" width="34" height="1" fill="#00a000" />
<rect x="251" y="298" width="1" height="34" fill="#d00000" />
<rect x="238" y="331" width="63" height="1" fill="#d00000" />
<rect x="291" y="328" width="5" height="8" fill="#d00000" />
<rect x="296" y="329" width="6" height="6" fill="#d00000" />
<rect x="302" y="330" width="8" height="4" fill="#d00000" />
<rect x="310" y="331" width="6" height="2" fill="#d00000" />
<text x="218" y="226" font-family="Liberation Sans" font-size="9" fill="#f0d000" text-anchor="start" font-weight="normal" font-style="normal" >y</text>
<text x="318" y="327" font-family="Liberation Sans" font-size="9" fill="#e00000" text-anchor="start" font-weight="normal" font-style="normal" >x</text>
<rect x="48" y="455" width="1" height="24" fill="#00a000" />
<rect x="48" y="478" width="25" height="1" fill="#d00000" />
<text x="48" y="449" font-family="Liberation Sans" font-size="9" fill="#00b000" text-anchor="start" font-weight="normal" font-style="normal" >y</text>
<text x="49" y="474" font-family="Liberation Sans" font-size="9" fill="#0000d0" text-anchor="start" font-weight="normal" font-style="normal" >z</text>
<text x="74" y="474" font-family="Liberation Sans" font-size="9" fill="#e00000" text-anchor="start" font-weight="normal" font-style="normal" >x</text>
</g>
<g clip-path="url(#c2)">
<rect x="404" y="192" width="374" height="1" fill="#717171" />
<text x="409" y="161" font-family="Liberation Sans" font-size="11" fill="#cfcfcf" text-anchor="start" font-weight="normal" font-style="normal" textLength="168" lengthAdjust="spacingAndGlyphs" >[ + ] [ Front ] [ Smooth + Highlights ]</text>
<path d="M455 306.5 L594.5 439 L734 306.5 L734 503 L455 503 Z" fill="#9e2b55" stroke="none" stroke-width="1" />
<rect x="594" y="147" width="1" height="293" fill="#000" />
<path d="M523.5 295.5 L452.5 295.5 L452.5 503.5" fill="none" stroke="#ffffff" stroke-width="1" stroke-linejoin="miter"/>
<path d="M666.5 295.5 L736.5 295.5 L736.5 503.5" fill="none" stroke="#ffffff" stroke-width="1" stroke-linejoin="miter"/>
<rect x="454" y="306" width="4" height="4" fill="#e00000" />
<rect x="732" y="306" width="4" height="4" fill="#e00000" />
<rect x="547" y="398" width="4" height="4" fill="#5a5aff" />
<rect x="640" y="398" width="4" height="4" fill="#5a5aff" />
<rect x="593" y="439" width="4" height="4" fill="#5a5aff" />
<rect x="594" y="233" width="1" height="54" fill="#0000d8" />
<rect x="591" y="229" width="8" height="5" fill="#0000d8" />
<rect x="592" y="222" width="6" height="7" fill="#0000d8" />
<rect x="593" y="214" width="4" height="8" fill="#0000d8" />
<rect x="594" y="208" width="2" height="6" fill="#0000d8" />
<rect x="594" y="273" width="34" height="1" fill="#0000d8" />
<rect x="627" y="273" width="1" height="34" fill="#d00000" />
<rect x="614" y="306" width="78" height="1" fill="#d00000" />
<rect x="667" y="303" width="5" height="8" fill="#d00000" />
<rect x="672" y="304" width="6" height="6" fill="#d00000" />
<rect x="678" y="305" width="7" height="4" fill="#d00000" />
<rect x="685" y="306" width="6" height="2" fill="#d00000" />
<text x="596" y="202" font-family="Liberation Sans" font-size="9" fill="#0000e0" text-anchor="start" font-weight="normal" font-style="normal" >z</text>
<text x="694" y="302" font-family="Liberation Sans" font-size="9" fill="#e00000" text-anchor="start" font-weight="normal" font-style="normal" >x</text>
<ellipse cx="724.5" cy="218" rx="36" ry="3.6" fill="#6e6e6e" stroke="#a6aab0" stroke-width="1.2"/>
<rect x="710.5" y="186.5" width="29" height="29" rx="0" fill="#a9acb2" stroke="#646a72" stroke-width="1" />
<rect x="715" y="192" width="20" height="19" fill="#a3a6ac" />
<text x="724.5" y="205" font-family="Liberation Sans" font-size="8" fill="#5c6066" text-anchor="middle" font-weight="bold" font-style="normal" textLength="21" lengthAdjust="spacingAndGlyphs" >FRONT</text>
<rect x="429" y="454" width="1" height="25" fill="#0000d0" />
<rect x="429" y="478" width="25" height="1" fill="#d00000" />
<text x="430" y="449" font-family="Liberation Sans" font-size="9" fill="#0000d0" text-anchor="start" font-weight="normal" font-style="normal" >z</text>
<text x="430" y="475" font-family="Liberation Sans" font-size="9" fill="#00a000" text-anchor="start" font-weight="normal" font-style="normal" >y</text>
</g>
<g clip-path="url(#c3)">
<text x="28" y="525" font-family="Liberation Sans" font-size="11" fill="#cfcfcf" text-anchor="start" font-weight="normal" font-style="normal" textLength="116" lengthAdjust="spacingAndGlyphs" >[ + ] [ Left ] [ Wireframe ]</text>
<rect x="215" y="511" width="1" height="357" fill="#000" />
<rect x="55" y="627" width="321" height="1" fill="#ffffff" />
<rect x="55" y="627" width="1" height="241" fill="#ffffff" />
<rect x="162" y="627" width="1" height="241" fill="#ffffff" />
<rect x="268" y="627" width="1" height="241" fill="#ffffff" />
<rect x="375" y="627" width="1" height="241" fill="#ffffff" />
<rect x="55" y="730" width="321" height="1" fill="#ffffff" />
<rect x="55" y="776" width="321" height="1" fill="#ffffff" />
<rect x="54" y="626" width="4" height="4" fill="#e00000" />
<rect x="161" y="626" width="4" height="4" fill="#e00000" />
<rect x="267" y="626" width="4" height="4" fill="#e00000" />
<rect x="374" y="626" width="4" height="4" fill="#e00000" />
<rect x="54" y="729" width="3" height="3" fill="#5a5aff" />
<rect x="374" y="729" width="3" height="3" fill="#5a5aff" />
<rect x="54" y="775" width="3" height="3" fill="#5a5aff" />
<rect x="374" y="775" width="3" height="3" fill="#5a5aff" />
<rect x="215" y="554" width="1" height="54" fill="#0000d8" />
<rect x="212" y="550" width="8" height="5" fill="#0000d8" />
<rect x="213" y="543" width="6" height="7" fill="#0000d8" />
<rect x="214" y="536" width="4" height="7" fill="#0000d8" />
<rect x="215" y="529" width="2" height="7" fill="#0000d8" />
<rect x="182" y="594" width="34" height="1" fill="#0000d8" />
<rect x="182" y="594" width="1" height="34" fill="#00a000" />
<rect x="143" y="627" width="54" height="1" fill="#e8c000" />
<rect x="116" y="627" width="28" height="1" fill="#00a000" />
<rect x="137" y="624" width="6" height="8" fill="#00a000" />
<rect x="131" y="625" width="6" height="6" fill="#00a000" />
<rect x="123" y="626" width="8" height="4" fill="#00a000" />
<rect x="116" y="627" width="7" height="2" fill="#00a000" />
<text x="114" y="622" font-family="Liberation Sans" font-size="9" fill="#f0d000" text-anchor="start" font-weight="normal" font-style="normal" >y</text>
<text x="213" y="523" font-family="Liberation Sans" font-size="9" fill="#0000e0" text-anchor="start" font-weight="normal" font-style="normal" >z</text>
<ellipse cx="342.5" cy="582.5" rx="36" ry="3.6" fill="#6e6e6e" stroke="#a6aab0" stroke-width="1.2"/>
<rect x="327.5" y="550.5" width="30" height="30" rx="0" fill="#a9acb2" stroke="#646a72" stroke-width="1" />
<rect x="333" y="556" width="20" height="19" fill="#a3a6ac" />
<text x="342.5" y="568.5" font-family="Liberation Sans" font-size="8" fill="#5c6066" text-anchor="middle" font-weight="bold" font-style="normal" textLength="17" lengthAdjust="spacingAndGlyphs" >LEFT</text>
<rect x="48" y="819" width="1" height="25" fill="#0000d0" />
<rect x="25" y="843" width="24" height="1" fill="#00a000" />
<text x="48" y="814" font-family="Liberation Sans" font-size="9" fill="#0000d0" text-anchor="start" font-weight="normal" font-style="normal" >z</text>
<text x="24" y="840" font-family="Liberation Sans" font-size="9" fill="#00a000" text-anchor="start" font-weight="normal" font-style="normal" >y</text>
<text x="49" y="840" font-family="Liberation Sans" font-size="9" fill="#e00000" text-anchor="start" font-weight="normal" font-style="normal" >x</text>
</g>
<g clip-path="url(#c4)">
<text x="408" y="525" font-family="Liberation Sans" font-size="11" fill="#cfcfcf" text-anchor="start" font-weight="normal" font-style="normal" textLength="275" lengthAdjust="spacingAndGlyphs" >[ + ] [ Perspective ] [ Smooth + Highlights + Edged Faces ]</text>
<path d="M404 572.1 L778 617.6" fill="none" stroke="#757575" stroke-width="1" shape-rendering="crispEdges"/>
<path d="M404 588.3 L778 640.5" fill="none" stroke="#757575" stroke-width="1" shape-rendering="crispEdges"/>
<path d="M404 608.7 L778 669" fill="none" stroke="#757575" stroke-width="1" shape-rendering="crispEdges"/>
<path d="M404 636 L778 706.8" fill="none" stroke="#757575" stroke-width="1" shape-rendering="crispEdges"/>
<path d="M404 674 L778 758" fill="none" stroke="#757575" stroke-width="1" shape-rendering="crispEdges"/>
<path d="M404 731 L778 836.5" fill="none" stroke="#757575" stroke-width="1" shape-rendering="crispEdges"/>
<path d="M436.4 562.4 L778 601" fill="none" stroke="#757575" stroke-width="1" shape-rendering="crispEdges"/>
<path d="M404 573.5 L436.4 562.4" fill="none" stroke="#757575" stroke-width="1" shape-rendering="crispEdges"/>
<path d="M469.9 566.2 L-892.0 1091.6" fill="none" stroke="#757575" stroke-width="1" shape-rendering="crispEdges"/>
<path d="M506.4 570.3 L-1396.0 1411.6" fill="none" stroke="#757575" stroke-width="1" shape-rendering="crispEdges"/>
<path d="M546.6 574.9 L-1278.4 1509.0" fill="none" stroke="#757575" stroke-width="1" shape-rendering="crispEdges"/>
<path d="M585.6 579.3 L275.6 779.0" fill="none" stroke="#757575" stroke-width="1" shape-rendering="crispEdges"/>
<path d="M628.9 584.2 L297.0 865.0" fill="none" stroke="#757575" stroke-width="1" shape-rendering="crispEdges"/>
<path d="M678.9 589.8 L-893.0 2428.0" fill="none" stroke="#757575" stroke-width="1" shape-rendering="crispEdges"/>
<path d="M794.0 602.8 L240.4 4128.0" fill="none" stroke="#757575" stroke-width="1" shape-rendering="crispEdges"/>
<path d="M404 825.8 L600 899" fill="none" stroke="#000" stroke-width="1.2" />
<path d="M732.9 595.9 L560 940" fill="none" stroke="#000" stroke-width="1.2" />
<ellipse cx="724.5" cy="583.8" rx="32.5" ry="16" fill="#717171" stroke="#a4a8ae" stroke-width="5"/>
<ellipse cx="724.5" cy="583.8" rx="29.5" ry="13.2" fill="none" stroke="#64686e" stroke-width="1"/>
<path d="M705.6 556.7 L716.4 546 L743 550.3 L733 561.8 Z" fill="#b6bac0" stroke="none" stroke-width="1" />
<path d="M705.6 556.7 L733 561.8 L732.2 587 L706.3 580.5 Z" fill="#adb1b7" stroke="none" stroke-width="1" />
<path d="M733 561.8 L743 550.3 L742.3 575.5 L732.2 587 Z" fill="#9ca0a6" stroke="none" stroke-width="1" />
<path d="M705.6 556.7 L733 561.8 L743 550.3M733 561.8 L732.2 587" fill="none" stroke="#7c8290" stroke-width="0.8" stroke-dasharray="2 1.5"/>
<text x="719" y="576" font-family="Liberation Sans" font-size="8" fill="#6a6e74" text-anchor="middle" font-weight="bold" font-style="normal" textLength="16" lengthAdjust="spacingAndGlyphs" transform="rotate(9 719 576)">BACK</text>
<text x="722" y="556" font-family="Liberation Sans" font-size="6" fill="#7a7e84" text-anchor="middle" font-weight="normal" font-style="normal" transform="rotate(8 722 556)">IU</text>
<path d="M537 763 L622 757 L618 868 L545.5 868 Z" fill="#3d0a1b" stroke="none" stroke-width="1" />
<path d="M509 649 L559 615 L599 661.5 L645.4 624.7 L638.5 728 L606 780.4 L519 757 Z" fill="#3d0a1b" stroke="none" stroke-width="1" />
<path d="M509 649 L559 615 L599 661.5 L559 705 Z" fill="#7a0834" stroke="none" stroke-width="1" />
<path d="M573.9 693.6 L642 629.8 L644 634 L576 697 Z" fill="#22050e" stroke="none" stroke-width="1" />
<path d="M509 649 L559 615" fill="none" stroke="#ffffff" stroke-width="1.1" />
<path d="M509 649 L519 757 L606 780.4 L638.5 728 L644.8 626" fill="none" stroke="#ffffff" stroke-width="1.1" />
<path d="M509 649 L559 705 L599 661.5 L645.4 624.7" fill="none" stroke="#ffffff" stroke-width="1.1" />
<path d="M559 615 L599 661.5" fill="none" stroke="#ffffff" stroke-width="1.1" />
<path d="M543 688 L586.7 647.8" fill="none" stroke="#ffffff" stroke-width="1.1" />
<path d="M582 660 L599 661.7" fill="none" stroke="#ffffff" stroke-width="1.1" />
<path d="M573.9 693.6 L644.4 628.8" fill="none" stroke="#ffffff" stroke-width="1.1" />
<path d="M561 706 L634 639.6" fill="none" stroke="#ffffff" stroke-width="1.1" />
<path d="M567 702 L621.7 653" fill="none" stroke="#ffffff" stroke-width="1.1" />
<path d="M623.3 621.6 L645.4 624.7" fill="none" stroke="#ffffff" stroke-width="1.1" />
<path d="M509.8 647.5 L530.8 650.6" fill="none" stroke="#ffffff" stroke-width="1.1" />
<path d="M507 646.3 L556.7 612.3 L569 613.6" fill="none" stroke="#ffffff" stroke-width="1.1" />
<path d="M546.8 619.8 L556.7 612.3" fill="none" stroke="#ffffff" stroke-width="1.1" />
<path d="M507.3 647 L514.8 720" fill="none" stroke="#ffffff" stroke-width="1.1" />
<path d="M543 688 L546.8 765" fill="none" stroke="#ffffff" stroke-width="1.1" />
<path d="M559 705 L560.8 768.8" fill="none" stroke="#ffffff" stroke-width="1.1" />
<path d="M573.9 693.6 L575.8 773.4" fill="none" stroke="#ffffff" stroke-width="1.1" />
<path d="M608.9 669 L606 780.4" fill="none" stroke="#ffffff" stroke-width="1.1" />
<path d="M621.7 653 L618.8 760.6" fill="none" stroke="#ffffff" stroke-width="1.1" />
<path d="M634 639.6 L629.2 744.4" fill="none" stroke="#ffffff" stroke-width="1.1" />
<path d="M537 763 L545.5 868" fill="none" stroke="#ffffff" stroke-width="1.1" />
<path d="M557 767.8 L561.7 868" fill="none" stroke="#ffffff" stroke-width="1.1" />
<path d="M563.3 770 L568 868" fill="none" stroke="#ffffff" stroke-width="1.1" />
<path d="M577 774.7 L580 868" fill="none" stroke="#ffffff" stroke-width="1.1" />
<path d="M598.8 779.4 L598 868" fill="none" stroke="#ffffff" stroke-width="1.1" />
<path d="M606.5 781 L605 868" fill="none" stroke="#ffffff" stroke-width="1.1" />
<path d="M615 769 L612 868" fill="none" stroke="#ffffff" stroke-width="1.1" />
<path d="M622 757 L618 868" fill="none" stroke="#ffffff" stroke-width="1.1" />
<path d="M632 840 L630.4 868" fill="none" stroke="#ffffff" stroke-width="1.1" />
<rect x="506.8" y="647.3" width="4" height="4" fill="#e00000" />
<rect x="556.8" y="613.4" width="4" height="4" fill="#e00000" />
<rect x="541.8" y="623.7" width="4" height="4" fill="#e00000" />
<rect x="525.7" y="634.6" width="4" height="4" fill="#e00000" />
<rect x="606.9" y="666.9" width="4" height="4" fill="#e00000" />
<rect x="619.7" y="651" width="4" height="4" fill="#e00000" />
<rect x="632" y="637.6" width="4" height="4" fill="#e00000" />
<rect x="642.4" y="626.8" width="4" height="4" fill="#e00000" />
<rect x="557.3" y="703.4" width="3" height="3" fill="#5a5aff" />
<rect x="541.3" y="686.5" width="3" height="3" fill="#5a5aff" />
<rect x="572.4" y="692.1" width="3" height="3" fill="#5a5aff" />
<rect x="585.2" y="646.3" width="3" height="3" fill="#5a5aff" />
<rect x="597.5" y="660.2" width="3" height="3" fill="#5a5aff" />
<rect x="611.0" y="649.9" width="3" height="3" fill="#5a5aff" />
<rect x="517.5" y="755.5" width="3" height="3" fill="#5a5aff" />
<rect x="545.3" y="763.5" width="3" height="3" fill="#5a5aff" />
<rect x="559.3" y="767.3" width="3" height="3" fill="#5a5aff" />
<rect x="574.3" y="771.9" width="3" height="3" fill="#5a5aff" />
<rect x="604.5" y="778.9" width="3" height="3" fill="#5a5aff" />
<rect x="637.0" y="726.5" width="3" height="3" fill="#5a5aff" />
<rect x="627.7" y="742.9" width="3" height="3" fill="#5a5aff" />
<rect x="617.3" y="759.1" width="3" height="3" fill="#5a5aff" />
<rect x="579" y="567" width="1" height="53" fill="#0000e0" />
<path d="M579.5 537 L584.5 567 L574.5 567 Z" fill="#0000e0" stroke="none" stroke-width="1" />
<text x="577" y="529" font-family="Liberation Sans" font-size="9" fill="#0000e0" text-anchor="start" font-weight="normal" font-style="normal" >z</text>
<path d="M579.6 606.8 L550 601.9" fill="none" stroke="#0000e0" stroke-width="1.1" />
<path d="M579.6 606.8 L564.7 617.9" fill="none" stroke="#0000e0" stroke-width="1.1" />
<path d="M550.5 602 L550.5 634" fill="none" stroke="#e00000" stroke-width="1.1" />
<path d="M517 628 L562.9 635.8" fill="none" stroke="#e00000" stroke-width="1.1" />
<path d="M550 634 L535.7 645" fill="none" stroke="#e00000" stroke-width="1.1" />
<path d="M497.5 625 L517 624 L518 634 Z" fill="#d00000" stroke="none" stroke-width="1" />
<ellipse cx="517" cy="629" rx="2" ry="5" fill="#700000"/>
<text x="494" y="619" font-family="Liberation Sans" font-size="9" fill="#e00000" text-anchor="start" font-weight="normal" font-style="normal" >x</text>
<path d="M535.7 645 L565.4 650.6" fill="none" stroke="#00a000" stroke-width="1.1" />
<path d="M565.4 650.6 L565.4 618.5" fill="none" stroke="#00a000" stroke-width="1.1" />
<path d="M571.6 646.3 L549.3 665.4" fill="none" stroke="#e8c000" stroke-width="1.1" />
<path d="M531.4 680.2 L548 661 L555 667 Z" fill="#00a000" stroke="none" stroke-width="1" />
<ellipse cx="551.5" cy="664" rx="5" ry="3.5" fill="#00a000" transform="rotate(-40 551.5 664)"/>
<text x="529" y="676" font-family="Liberation Sans" font-size="9" fill="#f0d000" text-anchor="start" font-weight="normal" font-style="normal" >y</text>
<rect x="429" y="822" width="1" height="22" fill="#0000d0" />
<path d="M408.3 838 L429.5 843.5" fill="none" stroke="#d00000" stroke-width="1.1" />
<path d="M429.5 843.5 L421.3 852.3" fill="none" stroke="#00a000" stroke-width="1.1" />
<text x="430" y="817" font-family="Liberation Sans" font-size="9" fill="#0000d0" text-anchor="start" font-weight="normal" font-style="normal" >z</text>
<text x="407" y="834" font-family="Liberation Sans" font-size="9" fill="#e00000" text-anchor="start" font-weight="normal" font-style="normal" >x</text>
<text x="421" y="851" font-family="Liberation Sans" font-size="9" fill="#00b000" text-anchor="start" font-weight="normal" font-style="normal" >y</text>
</g>
<rect x="780" y="144" width="184" height="771" fill="#f0f0f0" />
<rect x="780" y="171" width="184" height="1" fill="#a0a0a0" />
<rect x="782.5" y="148.5" width="27" height="23" fill="url(#tabi)" stroke="#a8a8a8"/>
<rect x="842.5" y="148.5" width="26" height="23" fill="url(#tabi)" stroke="#a8a8a8"/>
<rect x="869.5" y="148.5" width="28" height="23" fill="url(#tabi)" stroke="#a8a8a8"/>
<rect x="898.5" y="148.5" width="28" height="23" fill="url(#tabi)" stroke="#a8a8a8"/>
<rect x="927.5" y="148.5" width="28" height="23" fill="url(#tabi)" stroke="#a8a8a8"/>
<path d="M809.5 172v-26.5h32v26.5" fill="#f0f0f0" stroke="#a8a8a8"/>
<rect x="810" y="171" width="31" height="2" fill="#f0f0f0" />
<circle cx="796" cy="160" r="6" fill="#f0c030" opacity="0.6"/>
<path d="M796 151v18M787 160h18M790 154l12 12M802 154l-12 12" fill="none" stroke="#d05020" stroke-width="1" />
<circle cx="796" cy="160" r="2.5" fill="#fff8c0"/>
<path d="M818 167 a16 16 0 0 1 15-15 v5 a11 11 0 0 0-10 10z" fill="#4a90d0" stroke="#2060a0" stroke-width="0.8" />
<path d="M820 165a13 13 0 0 1 12-12" fill="none" stroke="#c0e0f8" stroke-width="1" />
<rect x="817.5" y="150.5" width="3" height="3" rx="0" fill="#fff" stroke="#333" stroke-width="1" />
<rect x="832.5" y="165.5" width="3" height="3" rx="0" fill="#fff" stroke="#333" stroke-width="1" />
<path d="M818.5 152v13.5h14" fill="none" stroke="#555" stroke-width="0.8" stroke-dasharray="0"/>
<rect x="849.5" y="150.5" width="10" height="8" rx="0" fill="#dde4ec" stroke="#333" stroke-width="1" />
<path d="M854.5 159v3M848 165l6.5-3 6.5 3" fill="none" stroke="#333" stroke-width="1" />
<rect x="845.5" y="164.5" width="4" height="4" rx="0" fill="#fff" stroke="#333" stroke-width="1" />
<rect x="852.5" y="164.5" width="4" height="4" rx="0" fill="#fff" stroke="#333" stroke-width="1" />
<rect x="859.5" y="164.5" width="4" height="4" rx="0" fill="#fff" stroke="#333" stroke-width="1" />
<circle cx="886" cy="159.5" r="7" fill="#fff" stroke="#333" stroke-width="2"/><circle cx="886" cy="159.5" r="4" fill="none" stroke="#333" stroke-width="1"/><circle cx="886" cy="159.5" r="1" fill="#333"/>
<path d="M877 154a9 9 0 0 0 0 11M875 153a11 11 0 0 0 0 13" fill="none" stroke="#999" stroke-width="0.8" />
<rect x="903.65" y="151.65" width="17.7" height="12.7" rx="0" fill="#e4eaf0" stroke="#333" stroke-width="1.3" />
<rect x="909.5" y="154.5" width="6" height="6" rx="0" fill="#d0d8e0" stroke="#333" stroke-width="1" />
<rect x="905" y="167" width="16" height="1" fill="#333" />
<path d="M933 168 l13-12" fill="none" stroke="#333" stroke-width="3" />
<path d="M933 168 l13-12" fill="none" stroke="#d08070" stroke-width="1.5" />
<path d="M939 152l6-2 5 5-2 3-3-2-2 1z" fill="#334" stroke="#222" stroke-width="0.8" />
<rect x="789" y="179" width="145" height="19" fill="#ffffff" />
<rect x="789" y="179" width="145" height="1" fill="#111" />
<rect x="789" y="179" width="1" height="19" fill="#111" />
<rect x="790" y="197" width="144" height="1" fill="#e8e8e8" />
<text x="791" y="192" font-family="Liberation Sans" font-size="11" fill="#0a0a3a" text-anchor="start" font-weight="normal" font-style="normal" textLength="36" lengthAdjust="spacingAndGlyphs" >Box001</text>
<rect x="938" y="179" width="17" height="19" fill="#fff" />
<rect x="938" y="179" width="17" height="8" fill="#000" />
<rect x="938" y="179" width="1" height="19" fill="#999" />
<rect x="938" y="197" width="17" height="1" fill="#e8e8e8" />
<rect x="789.5" y="203.5" width="167" height="23" rx="2" fill="#fff" stroke="#d0d4d8"/>
<text x="792" y="219" font-family="Liberation Sans" font-size="11" fill="#0a0a3a" text-anchor="start" font-weight="normal" font-style="normal" textLength="58" lengthAdjust="spacingAndGlyphs" >Modifier List</text>
<path d="M945 214h8l-4 4z" fill="#000" stroke="none" stroke-width="1" />
<rect x="789.5" y="231.5" width="165" height="126" rx="0" fill="#fff" stroke="#9aa0a8" stroke-width="1" />
<rect x="791" y="249" width="161" height="16" fill="#f0ea8c" />
<circle cx="804" cy="239" r="3.8" fill="#fff" stroke="#111" stroke-width="1"/>
<rect x="802" y="243" width="4" height="3" fill="#fff" />
<rect x="802.5" y="242.5" width="4" height="3" rx="0" fill="#fff" stroke="#111" stroke-width="1" />
<rect x="817.5" y="236.5" width="9" height="9" rx="0" fill="#fff" stroke="#111" stroke-width="1" />
<rect x="819" y="240" width="6" height="1" fill="#111" />
<text x="832" y="245" font-family="Liberation Sans" font-size="11" fill="#0a0a2a" text-anchor="start" font-weight="normal" font-style="normal" textLength="41" lengthAdjust="spacingAndGlyphs" >Edit Poly</text>
<text x="842" y="261" font-family="Liberation Sans" font-size="11" fill="#0a0a2a" text-anchor="start" font-weight="normal" font-style="normal" textLength="32" lengthAdjust="spacingAndGlyphs" >Vertex</text>
<line x1="822" y1="256.5" x2="838" y2="256.5" stroke="#222" stroke-width="1" stroke-dasharray="1 1"/>
<text x="842" y="277" font-family="Liberation Sans" font-size="11" fill="#0a0a2a" text-anchor="start" font-weight="normal" font-style="normal" textLength="24" lengthAdjust="spacingAndGlyphs" >Edge</text>
<line x1="822" y1="272.5" x2="838" y2="272.5" stroke="#222" stroke-width="1" stroke-dasharray="1 1"/>
<text x="842" y="293" font-family="Liberation Sans" font-size="11" fill="#0a0a2a" text-anchor="start" font-weight="normal" font-style="normal" textLength="32" lengthAdjust="spacingAndGlyphs" >Border</text>
<line x1="822" y1="288.5" x2="838" y2="288.5" stroke="#222" stroke-width="1" stroke-dasharray="1 1"/>
<text x="842" y="309" font-family="Liberation Sans" font-size="11" fill="#0a0a2a" text-anchor="start" font-weight="normal" font-style="normal" textLength="38" lengthAdjust="spacingAndGlyphs" >Polygon</text>
<line x1="822" y1="304.5" x2="838" y2="304.5" stroke="#222" stroke-width="1" stroke-dasharray="1 1"/>
<text x="842" y="325" font-family="Liberation Sans" font-size="11" fill="#0a0a2a" text-anchor="start" font-weight="normal" font-style="normal" textLength="38" lengthAdjust="spacingAndGlyphs" >Element</text>
<line x1="822" y1="320.5" x2="838" y2="320.5" stroke="#222" stroke-width="1" stroke-dasharray="1 1"/>
<line x1="821.5" y1="246" x2="821.5" y2="321" stroke="#222" stroke-width="1" stroke-dasharray="1 1"/>
<rect x="791" y="328" width="162" height="1" fill="#808080" />
<rect x="791" y="344" width="162" height="1" fill="#808080" />
<text x="813" y="341" font-family="Liberation Sans" font-size="11" fill="#0a0a2a" text-anchor="start" font-weight="normal" font-style="normal" textLength="19" lengthAdjust="spacingAndGlyphs" >Box</text>
<path d="M943.5 235.5h3M945.5 234v3" fill="none" stroke="#000" stroke-width="1" />
<path d="M932.5 241.5h3M934.5 240v3" fill="none" stroke="#000" stroke-width="1" />
<path d="M938.5 245.5h3M940.5 244v3" fill="none" stroke="#000" stroke-width="1" />
<path d="M943.5 251.5h3M945.5 250v3" fill="none" stroke="#000" stroke-width="1" />
<path d="M932.5 257.5h3M934.5 256v3" fill="none" stroke="#000" stroke-width="1" />
<path d="M938.5 261.5h3M940.5 260v3" fill="none" stroke="#000" stroke-width="1" />
<path d="M796 373.5h6" fill="none" stroke="#111" stroke-width="1.6" />
<path d="M802.5 368v11M810.5 369v9" fill="none" stroke="#111" stroke-width="1.8" />
<path d="M803 370.5h7v6h-7z" fill="#222" stroke="none" stroke-width="1" />
<rect x="804" y="371" width="3" height="2" fill="#888" />
<rect x="822" y="366" width="1" height="16" fill="#a0a0a0" />
<path d="M837.5 367.5c1.5 0 2 1 2 2.5v10.5M846.5 367.5c-1.5 0-2 1-2 2.5v10.5" fill="none" stroke="#111" stroke-width="1.6" />
<rect x="858" y="366" width="1" height="16" fill="#a0a0a0" />
<path d="M869 367l6 8M881 367l-6 8M873 373l2 2 2-2" fill="none" stroke="#999" stroke-width="1" />
<circle cx="875" cy="377.5" r="2.3" fill="none" stroke="#999"/>
<path d="M895 371.5v7a4 2.5 0 0 0 8 0v-7" fill="#fff" stroke="#111" stroke-width="1.5"/>
<ellipse cx="899" cy="371.5" rx="4" ry="2" fill="#fff" stroke="#111" stroke-width="1.3"/>
<path d="M896 368a3 2.5 0 0 1 6-0.5" fill="none" stroke="#111" stroke-width="1" />
<rect x="918" y="366" width="1" height="16" fill="#a0a0a0" />
<rect x="929.7" y="367.7" width="13.6" height="12.6" rx="0" fill="#e8eef8" stroke="#1a30a0" stroke-width="1.4" />
<rect x="929" y="367" width="15" height="3" fill="#1a30a0" />
<rect x="932" y="372" width="2" height="2" fill="#555" />
<rect x="935" y="372" width="2" height="2" fill="#555" />
<rect x="938" y="372" width="2" height="2" fill="#555" />
<rect x="941" y="372" width="2" height="2" fill="#555" />
<rect x="933" y="375" width="2" height="2" fill="#555" />
<rect x="936" y="375" width="2" height="2" fill="#555" />
<rect x="939" y="375" width="2" height="2" fill="#555" />
<rect x="942" y="375" width="2" height="2" fill="#555" />
<rect x="932" y="378" width="2" height="2" fill="#555" />
<rect x="935" y="378" width="2" height="2" fill="#555" />
<rect x="938" y="378" width="2" height="2" fill="#555" />
<rect x="941" y="378" width="2" height="2" fill="#555" />
<rect x="786" y="397" width="174" height="1" fill="#111" />
<rect x="786" y="398" width="174" height="1" fill="#777" />
<rect x="784" y="406" width="1" height="504" fill="#a0a0a0" />
<rect x="785" y="406" width="1" height="504" fill="#ffffff" />
<rect x="784" y="406" width="174" height="1" fill="#a0a0a0" />
<rect x="785" y="407" width="169" height="1" fill="#ffffff" />
<rect x="954" y="406" width="4" height="232" fill="#a0a0a0" />
<rect x="954" y="638" width="4" height="270" fill="#000" />
<rect x="958" y="406" width="1" height="502" fill="#ffffff" />
<rect x="787" y="419" width="1" height="118" fill="#a8a8a8" />
<rect x="788" y="419" width="1" height="118" fill="#fff" />
<rect x="951" y="419" width="1" height="118" fill="#a8a8a8" />
<rect x="952" y="419" width="1" height="118" fill="#fff" />
<rect x="787" y="536" width="165" height="1" fill="#a8a8a8" />
<rect x="788" y="537" width="165" height="1" fill="#fff" />
<rect x="787" y="419" width="4" height="1" fill="#a8a8a8" />
<rect x="949" y="419" width="3" height="1" fill="#a8a8a8" />
<rect x="791" y="411" width="157" height="14" fill="url(#rh)" />
<rect x="792" y="425" width="157" height="1" fill="#6e6e6e" />
<rect x="792" y="426" width="157" height="1" fill="#9a9a9a" />
<rect x="947" y="412" width="1" height="15" fill="#8a8a8a" />
<rect x="948" y="412" width="1" height="15" fill="#7a7a7a" />
<rect x="791" y="411" width="1" height="14" fill="#fff" />
<text x="870" y="422.5" font-family="Liberation Sans" font-size="11" fill="#111" text-anchor="middle" font-weight="normal" font-style="normal" textLength="70" lengthAdjust="spacingAndGlyphs" >Edit Poly Mode</text>
<path d="M937 418l3-3 3 3M937 422l3-3 3 3" fill="none" stroke="#555" stroke-width="1.6" />
<circle cx="807" cy="440" r="5.5" fill="#f4f4f4" stroke="#8a8a8a" stroke-width="1"/>
<circle cx="807" cy="440" r="3.2" fill="#1c6ab0"/><circle cx="806.2" cy="439.2" r="1.5" fill="#7ec8f0"/>
<text x="816" y="444" font-family="Liberation Sans" font-size="11" fill="#0a0a2a" text-anchor="start" font-weight="normal" font-style="normal" textLength="28" lengthAdjust="spacingAndGlyphs" >Model</text>
<circle cx="881" cy="440" r="5.5" fill="#f4f4f4" stroke="#8a8a8a" stroke-width="1"/>
<text x="890.5" y="444" font-family="Liberation Sans" font-size="11" fill="#0a0a2a" text-anchor="start" font-weight="normal" font-style="normal" textLength="38" lengthAdjust="spacingAndGlyphs" >Animate</text>
<text x="869.5" y="462" font-family="Liberation Sans" font-size="11" fill="#0a0a2a" text-anchor="middle" font-weight="normal" font-style="normal" textLength="118" lengthAdjust="spacingAndGlyphs" >&lt;No Current Operation&gt;</text>
<rect x="838.5" y="470.5" width="62" height="15" rx="2.5" fill="url(#btn)" stroke="#8c8c8c"/>
<text x="869.5" y="482.0" font-family="Liberation Sans" font-size="11" fill="#ffffff" text-anchor="middle" font-weight="normal" font-style="normal" textLength="36" lengthAdjust="spacingAndGlyphs" >Commit</text>
<text x="869.0" y="481.5" font-family="Liberation Sans" font-size="11" fill="#a4a4a4" text-anchor="middle" font-weight="normal" font-style="normal" textLength="36" lengthAdjust="spacingAndGlyphs" >Commit</text>
<rect x="802.5" y="495.5" width="62" height="15" rx="2.5" fill="url(#btn)" stroke="#8c8c8c"/>
<text x="833.5" y="507.0" font-family="Liberation Sans" font-size="11" fill="#ffffff" text-anchor="middle" font-weight="normal" font-style="normal" textLength="38" lengthAdjust="spacingAndGlyphs" >Settings</text>
<text x="833.0" y="506.5" font-family="Liberation Sans" font-size="11" fill="#a4a4a4" text-anchor="middle" font-weight="normal" font-style="normal" textLength="38" lengthAdjust="spacingAndGlyphs" >Settings</text>
<rect x="876.5" y="495.5" width="62" height="15" rx="2.5" fill="url(#btn)" stroke="#8c8c8c"/>
<text x="907.5" y="507.0" font-family="Liberation Sans" font-size="11" fill="#ffffff" text-anchor="middle" font-weight="normal" font-style="normal" textLength="32" lengthAdjust="spacingAndGlyphs" >Cancel</text>
<text x="907.0" y="506.5" font-family="Liberation Sans" font-size="11" fill="#a4a4a4" text-anchor="middle" font-weight="normal" font-style="normal" textLength="32" lengthAdjust="spacingAndGlyphs" >Cancel</text>
<rect x="800.5" y="516.5" width="12" height="12" rx="0" fill="#f4f4f4" stroke="#8a8a8a" stroke-width="1" />
<rect x="802.5" y="518.5" width="8" height="8" rx="0" fill="#e0e0e0" stroke="#e8e8e8" stroke-width="1" />
<text x="815.5" y="527" font-family="Liberation Sans" font-size="11" fill="#0a0a2a" text-anchor="start" font-weight="normal" font-style="normal" textLength="54" lengthAdjust="spacingAndGlyphs" >Show Cage</text>
<rect x="902.5" y="515.5" width="16" height="15" rx="0" fill="#ff9000" stroke="#222" stroke-width="1" />
<rect x="923.5" y="515.5" width="16" height="15" rx="0" fill="#f5dc00" stroke="#222" stroke-width="1" />
<rect x="787" y="553" width="1" height="263" fill="#a8a8a8" />
<rect x="788" y="553" width="1" height="263" fill="#fff" />
<rect x="951" y="553" width="1" height="263" fill="#a8a8a8" />
<rect x="952" y="553" width="1" height="263" fill="#fff" />
<rect x="787" y="815" width="165" height="1" fill="#a8a8a8" />
<rect x="788" y="816" width="165" height="1" fill="#fff" />
<rect x="787" y="553" width="4" height="1" fill="#a8a8a8" />
<rect x="949" y="553" width="3" height="1" fill="#a8a8a8" />
<rect x="791" y="545" width="157" height="14" fill="url(#rh)" />
<rect x="792" y="559" width="157" height="1" fill="#6e6e6e" />
<rect x="792" y="560" width="157" height="1" fill="#9a9a9a" />
<rect x="947" y="546" width="1" height="15" fill="#8a8a8a" />
<rect x="948" y="546" width="1" height="15" fill="#7a7a7a" />
<rect x="791" y="545" width="1" height="14" fill="#fff" />
<text x="870" y="556.5" font-family="Liberation Sans" font-size="11" fill="#111" text-anchor="middle" font-weight="normal" font-style="normal" textLength="43" lengthAdjust="spacingAndGlyphs" >Selection</text>
<path d="M937 552l3-3 3 3M937 556l3-3 3 3" fill="none" stroke="#555" stroke-width="1.6" />
<rect x="808" y="564" width="23" height="22" fill="#ffff00" />
<path d="M811.5 576.5h3M813.5 575v3" fill="none" stroke="#e00000" stroke-width="1" />
<path d="M822.5 569.5h3M824.5 568v3" fill="none" stroke="#e00000" stroke-width="1" />
<path d="M816.5 580.5h3M818.5 579v3" fill="none" stroke="#e00000" stroke-width="1" />
<path d="M837 575l14-7-4 12z" fill="none" stroke="#e00000" stroke-width="1.1" />
<path d="M864 568c4-2 7 2 5 6-2 3 2 5 0 7-3 2-6-1-5-4 0-3-3-7 0-9z" fill="none" stroke="#e00000" stroke-width="1.1" />
<rect x="885.5" y="568.5" width="12" height="11" rx="0" fill="#ee0000" stroke="#111" stroke-width="1" />
<path d="M908 574.5h9v6h-9zM908 574.5l4-4h9l-4 4M917 580.5l4-4v-6" fill="#ee0000" stroke="#111" stroke-width="0.9" />
<path d="M917 580.5l4-4v-6l-4 4z" fill="#602080" stroke="none" stroke-width="1" />
<rect x="798.5" y="592.5" width="12" height="12" rx="0" fill="#f4f4f4" stroke="#8a8a8a" stroke-width="1" />
<rect x="800.5" y="594.5" width="8" height="8" rx="0" fill="#e0e0e0" stroke="#e8e8e8" stroke-width="1" />
<text x="813.5" y="602.5" font-family="Liberation Sans" font-size="11" fill="#0a0a2a" text-anchor="start" font-weight="normal" font-style="normal" textLength="92" lengthAdjust="spacingAndGlyphs" >Use Stack Selection</text>
<rect x="798.5" y="611.5" width="12" height="12" rx="0" fill="#f0f0f0" stroke="#c4c4c4" stroke-width="1" />
<text x="813.5" y="621.5" font-family="Liberation Sans" font-size="11" fill="#9a9a9a" text-anchor="start" font-weight="normal" font-style="normal" textLength="46" lengthAdjust="spacingAndGlyphs" >By Vertex</text>
<rect x="798.5" y="631.5" width="12" height="12" rx="0" fill="#f4f4f4" stroke="#8a8a8a" stroke-width="1" />
<rect x="800.5" y="633.5" width="8" height="8" rx="0" fill="#e0e0e0" stroke="#e8e8e8" stroke-width="1" />
<text x="813.5" y="641.5" font-family="Liberation Sans" font-size="11" fill="#0a0a2a" text-anchor="start" font-weight="normal" font-style="normal" textLength="85" lengthAdjust="spacingAndGlyphs" >Ignore Backfacing</text>
<rect x="798.5" y="650.5" width="12" height="12" rx="0" fill="#f0f0f0" stroke="#c4c4c4" stroke-width="1" />
<text x="813.5" y="661" font-family="Liberation Sans" font-size="11" fill="#9a9a9a" text-anchor="start" font-weight="normal" font-style="normal" textLength="44" lengthAdjust="spacingAndGlyphs" >By Angle:</text>
<rect x="865" y="649" width="66" height="15" fill="#fff" />
<rect x="865" y="649" width="66" height="1" fill="#222" />
<rect x="865" y="649" width="1" height="15" fill="#222" />
<text x="868" y="660.5" font-family="Liberation Sans" font-size="11" fill="#9a9a9a" text-anchor="start" font-weight="normal" font-style="normal" textLength="21" lengthAdjust="spacingAndGlyphs" >45.0</text>
<rect x="933.5" y="649.5" width="9" height="14" rx="0" fill="#f0f0f4" stroke="#c0c0c8" stroke-width="1" />
<path d="M935 655h6l-3-4zM935 658h6l-3 4z" fill="#6a7ab0" stroke="none" stroke-width="1" />
<rect x="797.5" y="670.5" width="69" height="15" rx="2.5" fill="url(#btn)" stroke="#707070"/>
<text x="831.5" y="681.5" font-family="Liberation Sans" font-size="11" fill="#111" text-anchor="middle" font-weight="normal" font-style="normal" textLength="30" lengthAdjust="spacingAndGlyphs" >Shrink</text>
<rect x="873.5" y="670.5" width="70" height="15" rx="2.5" fill="url(#btn)" stroke="#707070"/>
<text x="908.0" y="681.5" font-family="Liberation Sans" font-size="11" fill="#111" text-anchor="middle" font-weight="normal" font-style="normal" textLength="26" lengthAdjust="spacingAndGlyphs" >Grow</text>
<rect x="797.5" y="693.5" width="56" height="15" rx="2.5" fill="url(#btn)" stroke="#8c8c8c"/>
<text x="825.5" y="705.0" font-family="Liberation Sans" font-size="11" fill="#ffffff" text-anchor="middle" font-weight="normal" font-style="normal" textLength="22" lengthAdjust="spacingAndGlyphs" >Ring</text>
<text x="825.0" y="704.5" font-family="Liberation Sans" font-size="11" fill="#a4a4a4" text-anchor="middle" font-weight="normal" font-style="normal" textLength="22" lengthAdjust="spacingAndGlyphs" >Ring</text>
<rect x="856.5" y="693.5" width="9" height="14" rx="0" fill="#f0f0f4" stroke="#c0c0c8" stroke-width="1" />
<path d="M858 699h6l-3-4zM858 702h6l-3 4z" fill="#6a7ab0" stroke="none" stroke-width="1" />
<rect x="873.5" y="693.5" width="55" height="15" rx="2.5" fill="url(#btn)" stroke="#8c8c8c"/>
<text x="901.0" y="705.0" font-family="Liberation Sans" font-size="11" fill="#ffffff" text-anchor="middle" font-weight="normal" font-style="normal" textLength="24" lengthAdjust="spacingAndGlyphs" >Loop</text>
<text x="900.5" y="704.5" font-family="Liberation Sans" font-size="11" fill="#a4a4a4" text-anchor="middle" font-weight="normal" font-style="normal" textLength="24" lengthAdjust="spacingAndGlyphs" >Loop</text>
<rect x="931.5" y="693.5" width="9" height="14" rx="0" fill="#f0f0f4" stroke="#c0c0c8" stroke-width="1" />
<path d="M933 699h6l-3-4zM933 702h6l-3 4z" fill="#6a7ab0" stroke="none" stroke-width="1" />
<rect x="797.5" y="715.5" width="146" height="15" rx="2.5" fill="url(#btn)" stroke="#707070"/>
<text x="870.0" y="726.5" font-family="Liberation Sans" font-size="11" fill="#111" text-anchor="middle" font-weight="normal" font-style="normal" textLength="91" lengthAdjust="spacingAndGlyphs" >Get Stack Selection</text>
<rect x="790.5" y="743.5" width="157" height="30" rx="3" fill="none" stroke="#d8e4ec"/>
<rect x="795" y="740" width="85" height="8" fill="#f0f0f0" />
<text x="797.5" y="747" font-family="Liberation Sans" font-size="11" fill="#0a0a2a" text-anchor="start" font-weight="normal" font-style="normal" textLength="86" lengthAdjust="spacingAndGlyphs" >Preview Selection</text>
<circle cx="796.7" cy="760.8" r="5.5" fill="#f4f4f4" stroke="#8a8a8a" stroke-width="1"/>
<circle cx="796.7" cy="760.8" r="3.2" fill="#1c6ab0"/><circle cx="795.9000000000001" cy="760.0" r="1.5" fill="#7ec8f0"/>
<text x="806" y="765" font-family="Liberation Sans" font-size="11" fill="#0a0a2a" text-anchor="start" font-weight="normal" font-style="normal" textLength="15" lengthAdjust="spacingAndGlyphs" >Off</text>
<circle cx="845.7" cy="760.8" r="5.5" fill="#f4f4f4" stroke="#8a8a8a" stroke-width="1"/>
<text x="855.5" y="765" font-family="Liberation Sans" font-size="11" fill="#0a0a2a" text-anchor="start" font-weight="normal" font-style="normal" textLength="35" lengthAdjust="spacingAndGlyphs" >SubObj</text>
<circle cx="907.8" cy="760.8" r="5.5" fill="#f4f4f4" stroke="#8a8a8a" stroke-width="1"/>
<text x="917.5" y="765" font-family="Liberation Sans" font-size="11" fill="#0a0a2a" text-anchor="start" font-weight="normal" font-style="normal" textLength="22" lengthAdjust="spacingAndGlyphs" >Multi</text>
<text x="942.5" y="790" font-family="Liberation Sans" font-size="11" fill="#0a0a2a" text-anchor="end" font-weight="normal" font-style="normal" textLength="91" lengthAdjust="spacingAndGlyphs" >8 Vertices Selected</text>
<rect x="787" y="827" width="1" height="9" fill="#a8a8a8" />
<rect x="787" y="827" width="3" height="1" fill="#a8a8a8" />
<rect x="951" y="827" width="1" height="9" fill="#a8a8a8" />
<rect x="949" y="827" width="3" height="1" fill="#a8a8a8" />
<rect x="791" y="823" width="157" height="14" fill="url(#rh)" />
<rect x="792" y="837" width="157" height="1" fill="#6e6e6e" />
<rect x="792" y="838" width="157" height="1" fill="#9a9a9a" />
<rect x="947" y="824" width="1" height="15" fill="#8a8a8a" />
<rect x="948" y="824" width="1" height="15" fill="#7a7a7a" />
<rect x="791" y="823" width="1" height="14" fill="#fff" />
<text x="870" y="834.5" font-family="Liberation Sans" font-size="11" fill="#111" text-anchor="middle" font-weight="normal" font-style="normal" textLength="66" lengthAdjust="spacingAndGlyphs" >Soft Selection</text>
<path d="M937 826l3 3 3-3M937 830l3 3 3-3" fill="none" stroke="#555" stroke-width="1.6" />
<rect x="787" y="851" width="1" height="59" fill="#a8a8a8" />
<rect x="788" y="851" width="1" height="59" fill="#fff" />
<rect x="951" y="851" width="1" height="59" fill="#a8a8a8" />
<rect x="952" y="851" width="1" height="59" fill="#fff" />
<rect x="787" y="909" width="165" height="1" fill="#a8a8a8" />
<rect x="788" y="910" width="165" height="1" fill="#fff" />
<rect x="787" y="851" width="4" height="1" fill="#a8a8a8" />
<rect x="949" y="851" width="3" height="1" fill="#a8a8a8" />
<rect x="791" y="844" width="157" height="14" fill="url(#rh)" />
<rect x="792" y="858" width="157" height="1" fill="#6e6e6e" />
<rect x="792" y="859" width="157" height="1" fill="#9a9a9a" />
<rect x="947" y="845" width="1" height="15" fill="#8a8a8a" />
<rect x="948" y="845" width="1" height="15" fill="#7a7a7a" />
<rect x="791" y="844" width="1" height="14" fill="#fff" />
<text x="870" y="855.5" font-family="Liberation Sans" font-size="11" fill="#111" text-anchor="middle" font-weight="normal" font-style="normal" textLength="59" lengthAdjust="spacingAndGlyphs" >Edit Vertices</text>
<path d="M937 851l3-3 3 3M937 855l3-3 3 3" fill="none" stroke="#555" stroke-width="1.6" />
<rect x="797.5" y="867.5" width="69" height="15" rx="2.5" fill="url(#btn)" stroke="#707070"/>
<text x="831.5" y="878.5" font-family="Liberation Sans" font-size="11" fill="#111" text-anchor="middle" font-weight="normal" font-style="normal" textLength="40" lengthAdjust="spacingAndGlyphs" >Remove</text>
<rect x="873.5" y="867.5" width="70" height="15" rx="2.5" fill="url(#btn)" stroke="#707070"/>
<text x="908.0" y="878.5" font-family="Liberation Sans" font-size="11" fill="#111" text-anchor="middle" font-weight="normal" font-style="normal" textLength="28" lengthAdjust="spacingAndGlyphs" >Break</text>
<rect x="797.5" y="889.5" width="53" height="15" rx="2.5" fill="url(#btn)" stroke="#707070"/>
<text x="823.5" y="900.5" font-family="Liberation Sans" font-size="11" fill="#111" text-anchor="middle" font-weight="normal" font-style="normal" textLength="37" lengthAdjust="spacingAndGlyphs" >Extrude</text>
<rect x="853.5" y="889.5" width="13" height="15" rx="2" fill="url(#btn)" stroke="#707070"/>
<rect x="856.5" y="892.5" width="7" height="9" rx="0" fill="#fff" stroke="#111" stroke-width="1" />
<rect x="856" y="892" width="8" height="3" fill="#111" />
<rect x="873.5" y="889.5" width="54" height="15" rx="2.5" fill="url(#btn)" stroke="#707070"/>
<text x="900.0" y="900.5" font-family="Liberation Sans" font-size="11" fill="#111" text-anchor="middle" font-weight="normal" font-style="normal" textLength="25" lengthAdjust="spacingAndGlyphs" >Weld</text>
<rect x="930.5" y="889.5" width="13" height="15" rx="2" fill="url(#btn)" stroke="#707070"/>
<rect x="933.5" y="892.5" width="7" height="9" rx="0" fill="#fff" stroke="#111" stroke-width="1" />
<rect x="933" y="892" width="8" height="3" fill="#111" />
<rect x="781" y="914" width="183" height="1" fill="#a0a0a0" />
<rect x="21" y="870" width="759" height="19" fill="#f0f0f0" />
<rect x="177" y="870" width="602" height="7" fill="#ffffff" />
<rect x="177" y="877" width="602" height="11" fill="#f4f4f4" />
<rect x="21" y="888" width="759" height="1" fill="#ffffff" />
<path d="M30 874v8l-4-4z" fill="#555" stroke="none" stroke-width="1" />
<rect x="38.5" y="871.5" width="122" height="15" rx="2" fill="url(#thumb)" stroke="#3c7fb1"/>
<text x="99.5" y="883.5" font-family="Liberation Sans" font-size="12" fill="#111" text-anchor="middle" font-weight="normal" font-style="normal" textLength="33" lengthAdjust="spacingAndGlyphs" >0 / 100</text>
<path d="M168 875v8l4-4z" fill="#333" stroke="none" stroke-width="1" />
<rect x="21" y="889" width="759" height="26" fill="#f0f0f0" />
<rect x="70" y="890" width="660" height="24" fill="#c8c8c8" />
<rect x="21" y="889" width="759" height="1" fill="#909090" />
<rect x="21" y="914" width="759" height="1" fill="#ffffff" />
<rect x="74" y="890" width="1" height="25" fill="#6a6a6a" />
<rect x="81" y="890" width="1" height="11" fill="#707070" />
<rect x="87" y="890" width="1" height="11" fill="#707070" />
<rect x="94" y="890" width="1" height="11" fill="#707070" />
<rect x="100" y="890" width="1" height="11" fill="#707070" />
<rect x="107" y="890" width="1" height="11" fill="#707070" />
<rect x="113" y="890" width="1" height="11" fill="#707070" />
<rect x="120" y="890" width="1" height="11" fill="#707070" />
<rect x="126" y="890" width="1" height="11" fill="#707070" />
<rect x="133" y="890" width="1" height="11" fill="#707070" />
<rect x="139" y="890" width="1" height="25" fill="#6a6a6a" />
<rect x="146" y="890" width="1" height="11" fill="#707070" />
<rect x="152" y="890" width="1" height="11" fill="#707070" />
<rect x="159" y="890" width="1" height="11" fill="#707070" />
<rect x="165" y="890" width="1" height="11" fill="#707070" />
<rect x="172" y="890" width="1" height="11" fill="#707070" />
<rect x="178" y="890" width="1" height="11" fill="#707070" />
<rect x="185" y="890" width="1" height="11" fill="#707070" />
<rect x="192" y="890" width="1" height="11" fill="#707070" />
<rect x="198" y="890" width="1" height="11" fill="#707070" />
<rect x="205" y="890" width="1" height="25" fill="#6a6a6a" />
<rect x="211" y="890" width="1" height="11" fill="#707070" />
<rect x="218" y="890" width="1" height="11" fill="#707070" />
<rect x="224" y="890" width="1" height="11" fill="#707070" />
<rect x="231" y="890" width="1" height="11" fill="#707070" />
<rect x="237" y="890" width="1" height="11" fill="#707070" />
<rect x="244" y="890" width="1" height="11" fill="#707070" />
<rect x="250" y="890" width="1" height="11" fill="#707070" />
<rect x="257" y="890" width="1" height="11" fill="#707070" />
<rect x="263" y="890" width="1" height="11" fill="#707070" />
<rect x="270" y="890" width="1" height="25" fill="#6a6a6a" />
<rect x="276" y="890" width="1" height="11" fill="#707070" />
<rect x="283" y="890" width="1" height="11" fill="#707070" />
<rect x="289" y="890" width="1" height="11" fill="#707070" />
<rect x="296" y="890" width="1" height="11" fill="#707070" />
<rect x="303" y="890" width="1" height="11" fill="#707070" />
<rect x="309" y="890" width="1" height="11" fill="#707070" />
<rect x="316" y="890" width="1" height="11" fill="#707070" />
<rect x="322" y="890" width="1" height="11" fill="#707070" />
<rect x="329" y="890" width="1" height="11" fill="#707070" />
<rect x="335" y="890" width="1" height="25" fill="#6a6a6a" />
<rect x="342" y="890" width="1" height="11" fill="#707070" />
<rect x="348" y="890" width="1" height="11" fill="#707070" />
<rect x="355" y="890" width="1" height="11" fill="#707070" />
<rect x="361" y="890" width="1" height="11" fill="#707070" />
<rect x="368" y="890" width="1" height="11" fill="#707070" />
<rect x="374" y="890" width="1" height="11" fill="#707070" />
<rect x="381" y="890" width="1" height="11" fill="#707070" />
<rect x="387" y="890" width="1" height="11" fill="#707070" />
<rect x="394" y="890" width="1" height="11" fill="#707070" />
<rect x="400" y="890" width="1" height="25" fill="#6a6a6a" />
<rect x="407" y="890" width="1" height="11" fill="#707070" />
<rect x="414" y="890" width="1" height="11" fill="#707070" />
<rect x="420" y="890" width="1" height="11" fill="#707070" />
<rect x="427" y="890" width="1" height="11" fill="#707070" />
<rect x="433" y="890" width="1" height="11" fill="#707070" />
<rect x="440" y="890" width="1" height="11" fill="#707070" />
<rect x="446" y="890" width="1" height="11" fill="#707070" />
<rect x="453" y="890" width="1" height="11" fill="#707070" />
<rect x="459" y="890" width="1" height="11" fill="#707070" />
<rect x="466" y="890" width="1" height="25" fill="#6a6a6a" />
<rect x="472" y="890" width="1" height="11" fill="#707070" />
<rect x="479" y="890" width="1" height="11" fill="#707070" />
<rect x="485" y="890" width="1" height="11" fill="#707070" />
<rect x="492" y="890" width="1" height="11" fill="#707070" />
<rect x="498" y="890" width="1" height="11" fill="#707070" />
<rect x="505" y="890" width="1" height="11" fill="#707070" />
<rect x="512" y="890" width="1" height="11" fill="#707070" />
<rect x="518" y="890" width="1" height="11" fill="#707070" />
<rect x="525" y="890" width="1" height="11" fill="#707070" />
<rect x="531" y="890" width="1" height="25" fill="#6a6a6a" />
<rect x="538" y="890" width="1" height="11" fill="#707070" />
<rect x="544" y="890" width="1" height="11" fill="#707070" />
<rect x="551" y="890" width="1" height="11" fill="#707070" />
<rect x="557" y="890" width="1" height="11" fill="#707070" />
<rect x="564" y="890" width="1" height="11" fill="#707070" />
<rect x="570" y="890" width="1" height="11" fill="#707070" />
<rect x="577" y="890" width="1" height="11" fill="#707070" />
<rect x="583" y="890" width="1" height="11" fill="#707070" />
<rect x="590" y="890" width="1" height="11" fill="#707070" />
<rect x="596" y="890" width="1" height="25" fill="#6a6a6a" />
<rect x="603" y="890" width="1" height="11" fill="#707070" />
<rect x="609" y="890" width="1" height="11" fill="#707070" />
<rect x="616" y="890" width="1" height="11" fill="#707070" />
<rect x="623" y="890" width="1" height="11" fill="#707070" />
<rect x="629" y="890" width="1" height="11" fill="#707070" />
<rect x="636" y="890" width="1" height="11" fill="#707070" />
<rect x="642" y="890" width="1" height="11" fill="#707070" />
<rect x="649" y="890" width="1" height="11" fill="#707070" />
<rect x="655" y="890" width="1" height="11" fill="#707070" />
<rect x="662" y="890" width="1" height="25" fill="#6a6a6a" />
<rect x="668" y="890" width="1" height="11" fill="#707070" />
<rect x="675" y="890" width="1" height="11" fill="#707070" />
<rect x="681" y="890" width="1" height="11" fill="#707070" />
<rect x="688" y="890" width="1" height="11" fill="#707070" />
<rect x="694" y="890" width="1" height="11" fill="#707070" />
<rect x="701" y="890" width="1" height="11" fill="#707070" />
<rect x="707" y="890" width="1" height="11" fill="#707070" />
<rect x="714" y="890" width="1" height="11" fill="#707070" />
<rect x="720" y="890" width="1" height="11" fill="#707070" />
<rect x="727" y="890" width="1" height="25" fill="#6a6a6a" />
<text x="139.8" y="911" font-family="Liberation Sans" font-size="11" fill="#111" text-anchor="middle" font-weight="normal" font-style="normal" textLength="12" lengthAdjust="spacingAndGlyphs" >10</text>
<text x="205.1" y="911" font-family="Liberation Sans" font-size="11" fill="#111" text-anchor="middle" font-weight="normal" font-style="normal" textLength="12" lengthAdjust="spacingAndGlyphs" >20</text>
<text x="270.4" y="911" font-family="Liberation Sans" font-size="11" fill="#111" text-anchor="middle" font-weight="normal" font-style="normal" textLength="12" lengthAdjust="spacingAndGlyphs" >30</text>
<text x="335.7" y="911" font-family="Liberation Sans" font-size="11" fill="#111" text-anchor="middle" font-weight="normal" font-style="normal" textLength="12" lengthAdjust="spacingAndGlyphs" >40</text>
<text x="401.0" y="911" font-family="Liberation Sans" font-size="11" fill="#111" text-anchor="middle" font-weight="normal" font-style="normal" textLength="12" lengthAdjust="spacingAndGlyphs" >50</text>
<text x="466.3" y="911" font-family="Liberation Sans" font-size="11" fill="#111" text-anchor="middle" font-weight="normal" font-style="normal" textLength="12" lengthAdjust="spacingAndGlyphs" >60</text>
<text x="531.6" y="911" font-family="Liberation Sans" font-size="11" fill="#111" text-anchor="middle" font-weight="normal" font-style="normal" textLength="12" lengthAdjust="spacingAndGlyphs" >70</text>
<text x="596.9" y="911" font-family="Liberation Sans" font-size="11" fill="#111" text-anchor="middle" font-weight="normal" font-style="normal" textLength="12" lengthAdjust="spacingAndGlyphs" >80</text>
<text x="662.2" y="911" font-family="Liberation Sans" font-size="11" fill="#111" text-anchor="middle" font-weight="normal" font-style="normal" textLength="12" lengthAdjust="spacingAndGlyphs" >90</text>
<text x="727.5" y="911" font-family="Liberation Sans" font-size="11" fill="#111" text-anchor="middle" font-weight="normal" font-style="normal" textLength="18" lengthAdjust="spacingAndGlyphs" >100</text>
<rect x="71" y="891" width="7" height="23" fill="#96b6d2" />
<rect x="70.5" y="890.5" width="8" height="24" rx="0" fill="none" stroke="#7c7c7c" stroke-width="1" />
<rect x="74" y="890" width="1" height="13" fill="#4a6070" />
<rect x="74" y="913" width="1" height="2" fill="#4a6070" />
<text x="73.5" y="912" font-family="Liberation Sans" font-size="10" fill="#1a2a6a" text-anchor="middle" font-weight="normal" font-style="normal" textLength="5" lengthAdjust="spacingAndGlyphs" >0</text>
<rect x="34.8" y="893.8" width="15.4" height="5.4" rx="0" fill="#fff" stroke="#111" stroke-width="1.6" />
<path d="M37 897c2-2 3 0 5 0s3-1 4-1h2" fill="none" stroke="#111" stroke-width="0.9" />
<path d="M38.5 906v-4M36.5 903.5l2-2.5 2 2.5M47.5 901v4M45.5 903.5l2 2.5 2-2.5" fill="none" stroke="#111" stroke-width="1.1" />
<rect x="34" y="907" width="17" height="4" fill="#111" />
<rect x="36" y="908" width="4" height="2" fill="#fff" />
<rect x="41" y="908" width="4" height="2" fill="#fff" />
<rect x="46" y="908" width="3" height="2" fill="#fff" />
<rect x="21" y="915" width="943" height="50" fill="#f0f0f0" />
<rect x="21" y="964" width="943" height="1" fill="#ffffff" />
<rect x="22.75" y="917.75" width="95.5" height="20.5" rx="0" fill="#dcc4c4" stroke="#8a8a8a" stroke-width="1.5" />
<rect x="22.75" y="940.75" width="95.5" height="20.5" rx="0" fill="#ffffff" stroke="#8a8a8a" stroke-width="1.5" />
<text x="28" y="953.5" font-family="Liberation Mono" font-size="11" fill="#111" text-anchor="start" font-weight="normal" font-style="normal" textLength="87" lengthAdjust="spacingAndGlyphs" >Welcome to Mi</text>
<rect x="124" y="917" width="1" height="47" fill="#a8a8a8" />
<rect x="125" y="917" width="1" height="47" fill="#fff" />
<path d="M135 928v-3a4 4 0 0 1 8 0v3" fill="none" stroke="#444" stroke-width="1.5"/>
<rect x="133.5" y="928.5" width="11" height="8" rx="0" fill="#e8d4a8" stroke="#444" stroke-width="1" />
<rect x="158.5" y="921.5" width="15" height="15" rx="0" fill="#eef0f2" stroke="#444" stroke-width="1" />
<circle cx="166" cy="929" r="3.5" fill="none" stroke="#444"/>
<path d="M166 921v4M166 933v4M158 929h4M170 929h4" fill="none" stroke="#444" stroke-width="1" />
<text x="181" y="933" font-family="Liberation Sans" font-size="11" fill="#111" text-anchor="start" font-weight="normal" font-style="normal" textLength="10" lengthAdjust="spacingAndGlyphs" >X:</text>
<rect x="192" y="919" width="58" height="21" fill="#fff" />
<rect x="192" y="919" width="58" height="1" fill="#a0a0a0" />
<rect x="192" y="919" width="1" height="21" fill="#a0a0a0" />
<rect x="193" y="920" width="56" height="1" fill="#000" />
<rect x="193" y="920" width="1" height="19" fill="#000" />
<rect x="192" y="939" width="58" height="1" fill="#f4f4f4" />
<text x="196" y="933.5" font-family="Liberation Sans" font-size="11" fill="#111" text-anchor="start" font-weight="normal" font-style="normal" textLength="15" lengthAdjust="spacingAndGlyphs" >0.0</text>
<rect x="252.5" y="920.5" width="8" height="17" rx="0" fill="#eef0f6" stroke="#c4c8d0" stroke-width="1" />
<path d="M253.5 928h6l-3-5zM253.5 930h6l-3 5z" fill="#6a7ab0" stroke="none" stroke-width="1" />
<text x="264" y="933" font-family="Liberation Sans" font-size="11" fill="#111" text-anchor="start" font-weight="normal" font-style="normal" textLength="10" lengthAdjust="spacingAndGlyphs" >Y:</text>
<rect x="274" y="919" width="58" height="21" fill="#fff" />
<rect x="274" y="919" width="58" height="1" fill="#a0a0a0" />
<rect x="274" y="919" width="1" height="21" fill="#a0a0a0" />
<rect x="275" y="920" width="56" height="1" fill="#000" />
<rect x="275" y="920" width="1" height="19" fill="#000" />
<rect x="274" y="939" width="58" height="1" fill="#f4f4f4" />
<text x="278" y="933.5" font-family="Liberation Sans" font-size="11" fill="#111" text-anchor="start" font-weight="normal" font-style="normal" textLength="19" lengthAdjust="spacingAndGlyphs" >-0.0</text>
<rect x="333.5" y="920.5" width="8" height="17" rx="0" fill="#eef0f6" stroke="#c4c8d0" stroke-width="1" />
<path d="M334.5 928h6l-3-5zM334.5 930h6l-3 5z" fill="#6a7ab0" stroke="none" stroke-width="1" />
<text x="345" y="933" font-family="Liberation Sans" font-size="11" fill="#111" text-anchor="start" font-weight="normal" font-style="normal" textLength="10" lengthAdjust="spacingAndGlyphs" >Z:</text>
<rect x="356" y="919" width="58" height="21" fill="#fff" />
<rect x="356" y="919" width="58" height="1" fill="#a0a0a0" />
<rect x="356" y="919" width="1" height="21" fill="#a0a0a0" />
<rect x="357" y="920" width="56" height="1" fill="#000" />
<rect x="357" y="920" width="1" height="19" fill="#000" />
<rect x="356" y="939" width="58" height="1" fill="#f4f4f4" />
<text x="360" y="933.5" font-family="Liberation Sans" font-size="11" fill="#111" text-anchor="start" font-weight="normal" font-style="normal" textLength="28" lengthAdjust="spacingAndGlyphs" >1.808</text>
<rect x="415.5" y="920.5" width="8" height="17" rx="0" fill="#eef0f6" stroke="#c4c8d0" stroke-width="1" />
<path d="M416.5 928h6l-3-5zM416.5 930h6l-3 5z" fill="#6a7ab0" stroke="none" stroke-width="1" />
<rect x="428.5" y="919.5" width="95" height="20" rx="0" fill="#f0f0f0" stroke="#c8c8c8" stroke-width="1" />
<rect x="429" y="919" width="95" height="1" fill="#a8a8a8" />
<text x="433" y="933" font-family="Liberation Sans" font-size="11" fill="#111" text-anchor="start" font-weight="normal" font-style="normal" textLength="50" lengthAdjust="spacingAndGlyphs" >Grid = 1.0</text>
<rect x="129.5" y="944.5" width="264" height="18" rx="0" fill="#f0f0f0" stroke="#c8c8c8" stroke-width="1" />
<rect x="129" y="944" width="265" height="1" fill="#a8a8a8" />
<rect x="129" y="944" width="1" height="19" fill="#a8a8a8" />
<text x="133" y="957" font-family="Liberation Sans" font-size="11" fill="#111" text-anchor="start" font-weight="normal" font-style="normal" textLength="118" lengthAdjust="spacingAndGlyphs" >Rendering Time  0:00:00</text>
<rect x="396" y="945" width="1" height="18" fill="#b0b0b0" />
<path d="M400.5 950.5l3-3h9v9l-3 3h-9z M400.5 950.5h9v9M409.5 950.5l3-3" fill="none" stroke="#333" stroke-width="1" />
<rect x="421.5" y="944.5" width="99" height="18" rx="0" fill="#f0f0f0" stroke="#c8c8c8" stroke-width="1" />
<rect x="421" y="944" width="100" height="1" fill="#a8a8a8" />
<rect x="421" y="944" width="1" height="19" fill="#a8a8a8" />
<text x="427" y="957" font-family="Liberation Sans" font-size="11" fill="#111" text-anchor="start" font-weight="normal" font-style="normal" textLength="64" lengthAdjust="spacingAndGlyphs" >Add Time Tag</text>
<rect x="525.5" y="919.5" width="41" height="41" rx="3" fill="url(#kbtn)" stroke="#8a8a8a"/>
<ellipse cx="539" cy="940" rx="4.5" ry="4" fill="#fff" stroke="#000" stroke-width="2.2"/>
<path d="M543.5 938.5h14v3h-3v4h-2.5v-4h-2v3h-2v-3h-4.5z" fill="#000" stroke="none" stroke-width="1" />
<rect x="572.5" y="919.5" width="46" height="19" rx="3" fill="url(#kbtn)" stroke="#8a8a8a"/>
<text x="595.0" y="933" font-family="Liberation Sans" font-size="12" fill="#111" text-anchor="middle" font-weight="normal" font-style="normal" textLength="43" lengthAdjust="spacingAndGlyphs" >Auto Key</text>
<rect x="572.5" y="941.5" width="46" height="19" rx="3" fill="url(#kbtn)" stroke="#8a8a8a"/>
<text x="595.0" y="955" font-family="Liberation Sans" font-size="12" fill="#111" text-anchor="middle" font-weight="normal" font-style="normal" textLength="37" lengthAdjust="spacingAndGlyphs" >Set Key</text>
<path d="M627 957l4-9 3 8 5-11 2 4" fill="none" stroke="#d02020" stroke-width="1.5" />
<path d="M626 957h6M636 946h6" fill="none" stroke="#6070d0" stroke-width="1" />
<path d="M641 958h2v2h-2z" fill="#000" stroke="none" stroke-width="1" />
<rect x="622.5" y="919.5" width="115" height="19" rx="3" fill="url(#kbtn)" stroke="#8a8a8a"/>
<text x="625.5" y="934" font-family="Liberation Sans" font-size="12" fill="#111" text-anchor="start" font-weight="normal" font-style="normal" textLength="42" lengthAdjust="spacingAndGlyphs" >Selected</text>
<path d="M725 928h8l-4 4z" fill="#000" stroke="none" stroke-width="1" />
<rect x="649.5" y="942.5" width="87" height="18" rx="3" fill="url(#kbtn)" stroke="#8a8a8a"/>
<text x="693" y="956" font-family="Liberation Sans" font-size="12" fill="#111" text-anchor="middle" font-weight="normal" font-style="normal" textLength="61" lengthAdjust="spacingAndGlyphs" >Key Filters...</text>
<path d="M747 923h3v12h-3zM762 923v12l-6-6zM756 923v12l-6-6z" fill="#222" stroke="none" stroke-width="1" />
<rect x="768" y="921" width="1" height="17" fill="#b0b0b0" />
<path d="M773 929l5-5v10zM779 924h2.5v10h-2.5zM783 924h2.5v10h-2.5zM787 924h2.5v10H787z" fill="#222" stroke="none" stroke-width="1" />
<path d="M799 923v12l11-6z" fill="#222" stroke="none" stroke-width="1" />
<path d="M809 935h2v2h-2z" fill="#000" stroke="none" stroke-width="1" />
<path d="M819 924h2.5v10H819zM823 924h2.5v10H823zM827 924h2.5v10H827zM829.5 924v10l5-5z" fill="#222" stroke="none" stroke-width="1" />
<path d="M845 923v12l6-6zM851 923v12l6-6zM857 923h3v12h-3z" fill="#222" stroke="none" stroke-width="1" />
<rect x="869" y="921" width="1" height="17" fill="#b0b0b0" />
<circle cx="879" cy="927.5" r="5" fill="#e4eef4" stroke="#333" stroke-width="1.5"/>
<path d="M882.5 931l4.5 4.5" fill="none" stroke="#222" stroke-width="2.6" />
<path d="M887 920v5M884.5 922.5h5M884.5 926.5h5" fill="none" stroke="#222" stroke-width="1" />
<rect x="897.6" y="922.6" width="11.8" height="10.8" rx="0" fill="#dde2e8" stroke="#333" stroke-width="1.2" />
<rect x="897" y="928" width="13" height="1" fill="#333" />
<rect x="903" y="922" width="1" height="12" fill="#333" />
<circle cx="905" cy="931" r="3.2" fill="#e4f0f0" stroke="#333" stroke-width="1.2"/>
<path d="M907.5 933.5l3 3" fill="none" stroke="#222" stroke-width="2" />
<path d="M919.5 924v-3h3M932 921h3v3M919.5 934v3h3M935.5 934v3h-3" fill="none" stroke="#222" stroke-width="1.2" />
<path d="M922.5 926.5l3-3h8v8l-3 3h-8z" fill="#dde2e8" stroke="#333" stroke-width="1" />
<path d="M930.5 926.5l3-3v8l-3 3z" fill="#9aa4b0" stroke="#333" stroke-width="1" />
<path d="M922.5 926.5h8" fill="none" stroke="#333" stroke-width="1" />
<path d="M934 938h2.5v-2.5z" fill="#000" stroke="none" stroke-width="1" />
<rect x="946.6" y="921.6" width="11.8" height="10.8" rx="0" fill="#dde2e8" stroke="#333" stroke-width="1.2" />
<rect x="946" y="927" width="13" height="1" fill="#333" />
<rect x="952" y="921" width="1" height="12" fill="#333" />
<path d="M941.5 930.5l3-3h8v8l-3 3h-8z" fill="#dde2e8" stroke="#333" stroke-width="1" />
<path d="M949.5 930.5l3-3v8l-3 3z" fill="#9aa4b0" stroke="#333" stroke-width="1" />
<path d="M941.5 930.5h8" fill="none" stroke="#333" stroke-width="1" />
<path d="M957 938h2.5v-2.5z" fill="#000" stroke="none" stroke-width="1" />
<rect x="746" y="946" width="2" height="11" fill="#222" />
<rect x="761" y="946" width="2" height="11" fill="#222" />
<path d="M748 951.5l6-4.5v9zM761 951.5l-6-4.5v9z" fill="#222" stroke="none" stroke-width="1" />
<rect x="769" y="941" width="64" height="21" fill="#fff" />
<rect x="769" y="941" width="64" height="1" fill="#a0a0a0" />
<rect x="769" y="941" width="1" height="21" fill="#a0a0a0" />
<rect x="770" y="942" width="62" height="1" fill="#000" />
<rect x="770" y="942" width="1" height="19" fill="#000" />
<text x="773" y="956" font-family="Liberation Sans" font-size="11" fill="#1a2a8a" text-anchor="start" font-weight="normal" font-style="normal" textLength="6" lengthAdjust="spacingAndGlyphs" >0</text>
<rect x="834.5" y="942.5" width="8" height="18" rx="0" fill="#eef0f6" stroke="#c4c8d0" stroke-width="1" />
<path d="M835.5 950h6l-3-5zM835.5 953h6l-3 5z" fill="#6a7ab0" stroke="none" stroke-width="1" />
<rect x="851.5" y="944.5" width="11" height="13" rx="0" fill="#e8eef8" stroke="#333" stroke-width="1" />
<rect x="853" y="946" width="6" height="4" fill="#4a6ab0" />
<circle cx="862" cy="956" r="4" fill="#fff" stroke="#333"/>
<rect x="868" y="944" width="1" height="17" fill="#b0b0b0" />
<path d="M874 944.5L889 951L874 957.5" fill="none" stroke="#333" stroke-width="1.2" />
<path d="M878.5 947a5 5 0 0 0 0 8" fill="none" stroke="#555" stroke-width="1" />
<path d="M889 960h2.5v-2.5z" fill="#000" stroke="none" stroke-width="1" />
<path d="M912 960h2.5v-2.5z" fill="#000" stroke="none" stroke-width="1" />
<path d="M935 960h2.5v-2.5z" fill="#000" stroke="none" stroke-width="1" />
<g transform="translate(900,944) scale(0.85) translate(-899,-944)"><path d="M899 961c-3-3-4-7-3-10l1-4c0-1.5 2-1.5 2 0v3l1-7c0-1.5 2-1.5 2 0v6l1-7c0-1.5 2-1.5 2 0v7l1-6c0-1.5 2-1.5 2 0v8l2-2c1-1 2.5 0 2 1.5l-3 6c-1 3-3 4.5-6 4.5z" fill="#f4f4f4" stroke="#222" stroke-width="1.1"/></g>
<circle cx="926" cy="952" r="5" fill="none" stroke="#555"/>
<path d="M926 944v8h7.5M926 952l-6.5 6.5" fill="none" stroke="#111" stroke-width="1.5" />
<path d="M924 946l2-3 2 3zM932 950l3 2-3 2zM919 956v3h3z" fill="#111" stroke="none" stroke-width="1" />
<rect x="943.5" y="944.5" width="11" height="11" rx="0" fill="#e0e4e8" stroke="#333" stroke-width="1" />
<path d="M946 947l6 5M946 947v3M946 947h3" fill="none" stroke="#111" stroke-width="1.3" />
<path d="M951 956v4h8v-8h-4" fill="none" stroke="#333" stroke-width="1" /></svg></body></html>
